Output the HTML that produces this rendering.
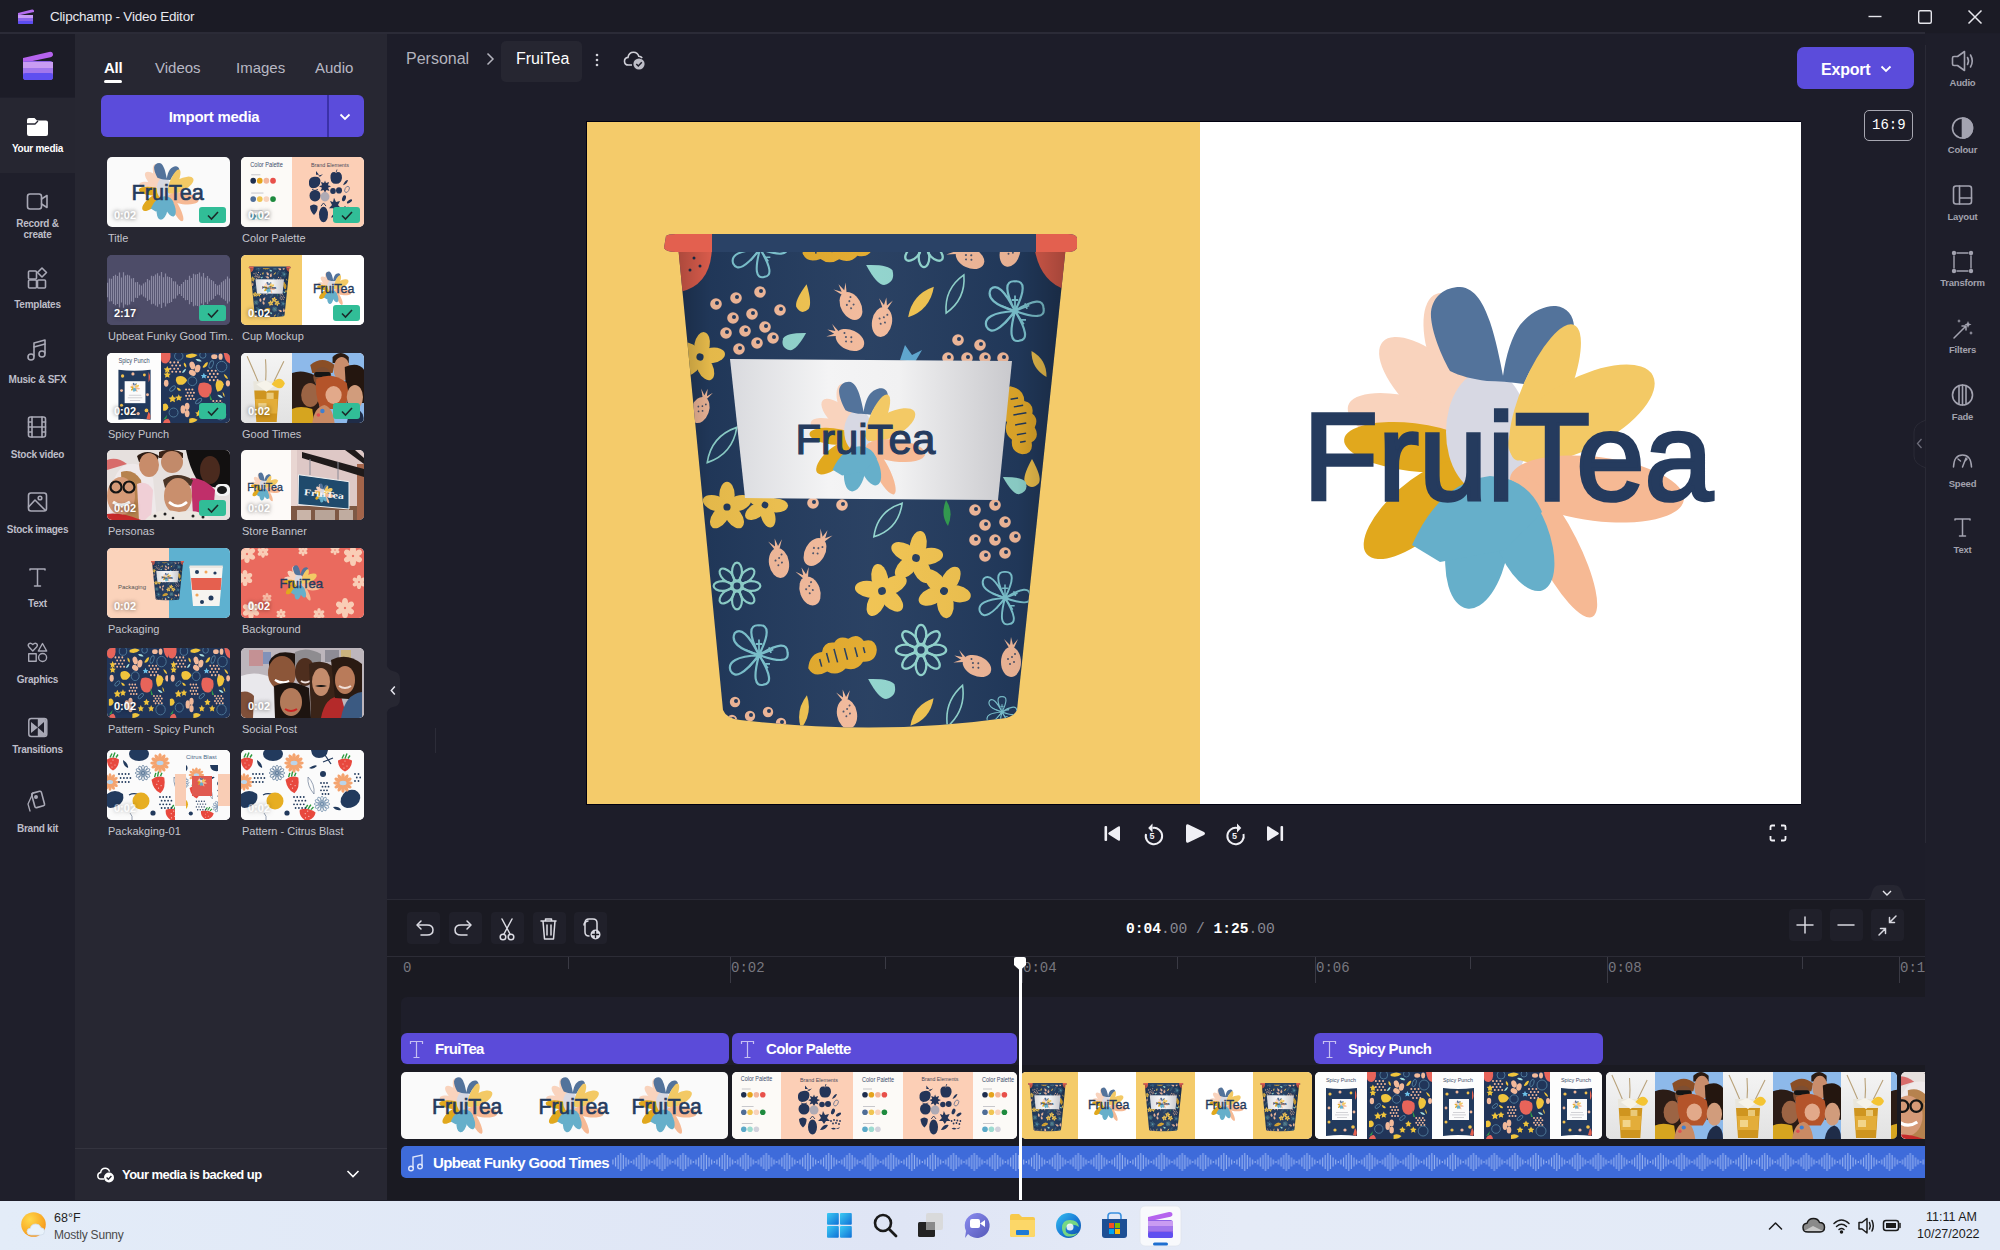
<!DOCTYPE html>
<html><head><meta charset="utf-8">
<style>
*{margin:0;padding:0;box-sizing:border-box}
html,body{width:2000px;height:1250px;overflow:hidden;background:#1d1d29;font-family:"Liberation Sans",sans-serif;color:#fff}
.a{position:absolute}
#title{left:0;top:0;width:2000px;height:33px;background:#1b1b25}
#tline{left:0;top:32px;width:1925px;height:2px;background:#2b2b37}
#rail{left:0;top:34px;width:75px;height:1166px;background:#1f1f2b}
#logo{left:0;top:34px;width:75px;height:63px;background:#1c1c27}
#sel{left:0;top:98px;width:75px;height:75px;background:#262631}
#panel{left:75px;top:34px;width:312px;height:1166px;background:#272732}
#main{left:387px;top:34px;width:1538px;height:865px;background:#1d1d29}
#rrail{left:1925px;top:34px;width:75px;height:1166px;background:#1e1e2a}
#tl{left:387px;top:899px;width:1538px;height:301px;background:#1a1a22}
#task{left:0;top:1201px;width:2000px;height:49px;background:linear-gradient(90deg,#e3ecf8,#dfe5f5 45%,#e5ebf7 62%,#e2eaf7)}
.nl{font-size:10px;color:#bdbdc8;text-align:center;width:75px;left:0;font-weight:bold;letter-spacing:-0.25px}
.tab{font-size:15px;color:#b8b8c4;top:59px}
.thumb{width:123px;height:70px;border-radius:5px;overflow:hidden;background:#fff}
.lbl{font-size:11px;color:#c4c4cc;white-space:nowrap}
.dur{font-size:11px;font-weight:bold;color:#fff;text-shadow:0 0 4px rgba(0,0,0,.6)}
.chk{width:27px;height:16px;border-radius:3px;background:#31bd97}
.rl{font-size:9.5px;color:#a2a2ae;text-align:center;width:75px;left:1925px;font-weight:bold;letter-spacing:-0.2px}
.tb{width:33px;height:32px;border-radius:4px;background:#20202a}
.rul{font-family:"Liberation Mono",monospace;font-size:14px;color:#77777f;top:960px}
.tick{width:1px;background:#3a3a44;top:957px}
.clipT{height:31px;top:1033px;border-radius:6px;background:#5b4bd9}
.ct{font-size:15px;font-weight:bold;letter-spacing:-0.6px;top:1040px}
.clipV{height:67px;top:1072px;border-radius:5px;overflow:hidden;background:#fff}
</style></head><body>
<svg width="0" height="0" style="position:absolute">
<defs>
<symbol id="fl" viewBox="1290 280 440 350">
<ellipse cx="1460.6" cy="357.0" rx="67.6" ry="30.0" transform="rotate(-111.2 1460.6 357.0)" fill="#f9d3bd"/>
<ellipse cx="1436.4" cy="390.9" rx="72.7" ry="30.0" transform="rotate(-137.5 1436.4 390.9)" fill="#f9d3bd"/>
<ellipse cx="1419.1" cy="427.8" rx="74.3" ry="28.0" transform="rotate(-162.6 1419.1 427.8)" fill="#f9d3bd"/>
<ellipse cx="1412.1" cy="447.1" rx="68.4" ry="24.0" transform="rotate(-173.4 1412.1 447.1)" fill="#e1a81d"/>
<ellipse cx="1418.4" cy="509.7" rx="68.2" ry="28.0" transform="rotate(139.1 1418.4 509.7)" fill="#e1a81d"/>
<ellipse cx="1487" cy="432" rx="41" ry="62" fill="#d7d8e3"/>
<path d="M1450 371 C1438 350 1430 325 1431 312 C1433 296 1445 287 1460 287 C1476 288 1484 305 1490 322 C1496 340 1500 360 1503 376 C1506 355 1512 336 1520 325 C1530 312 1545 305 1556 306 C1567 307 1574 316 1574 327 L1552 344 C1540 355 1530 368 1524 384 C1510 382 1498 381 1487 381 C1472 379 1460 376 1450 371Z" fill="#53739b"/>
<ellipse cx="1545.0" cy="392.4" rx="73.5" ry="23.0" transform="rotate(-66.7 1545.0 392.4)" fill="#f3c965"/>
<ellipse cx="1581.4" cy="413.7" rx="81.0" ry="35.0" transform="rotate(-28.2 1581.4 413.7)" fill="#f3c965"/>
<ellipse cx="1596.9" cy="489.0" rx="87.6" ry="32.0" transform="rotate(7.2 1596.9 489.0)" fill="#f6b994"/>
<ellipse cx="1557.3" cy="547.4" rx="77.8" ry="21.0" transform="rotate(63.1 1557.3 547.4)" fill="#f6b994"/>
<ellipse cx="1477.5" cy="544.3" rx="65.1" ry="31.0" transform="rotate(99.3 1477.5 544.3)" fill="#66afca"/>
<ellipse cx="1521.4" cy="535.1" rx="59.1" ry="27.0" transform="rotate(68.8 1521.4 535.1)" fill="#66afca"/>
<path d="M1412 545 Q1440 482 1490 476 Q1528 478 1542 512 L1505 550 L1440 562Z" fill="#66afca"/>
</symbol>
<symbol id="lg" viewBox="1290 280 440 350">
<use href="#fl" x="1290" y="280" width="440" height="350"/>
<text x="1303" y="500" font-family="Liberation Sans" font-size="125" textLength="410" lengthAdjust="spacingAndGlyphs" fill="#253b5e" stroke="#253b5e" stroke-width="3.6">FruiTea</text>
</symbol>

<symbol id="dz" viewBox="-30 -30 60 60"><g fill="none" stroke="#8fd3cc" stroke-width="2.4"><circle r="5"/><ellipse cx="0" cy="-16" rx="5.5" ry="10"/><ellipse cx="0" cy="-16" rx="5.5" ry="10" transform="rotate(45)"/><ellipse cx="0" cy="-16" rx="5.5" ry="10" transform="rotate(90)"/><ellipse cx="0" cy="-16" rx="5.5" ry="10" transform="rotate(135)"/><ellipse cx="0" cy="-16" rx="5.5" ry="10" transform="rotate(180)"/><ellipse cx="0" cy="-16" rx="5.5" ry="10" transform="rotate(225)"/><ellipse cx="0" cy="-16" rx="5.5" ry="10" transform="rotate(270)"/><ellipse cx="0" cy="-16" rx="5.5" ry="10" transform="rotate(315)"/></g></symbol>
<symbol id="hb" viewBox="-30 -30 60 60"><g fill="none" stroke="#7cc3cf" stroke-width="2"><path d="M0 0 Q-14 -28 0 -27 Q14 -28 0 0 Q26 -16 26 -2 Q28 10 0 0 Q16 26 4 27 Q-8 30 0 0 Q-20 26 -26 14 Q-30 2 0 0 Q-28 -8 -22 -20 Q-14 -28 0 0Z"/><path d="M0 0 L0 -14 M0 0 L13 -5 M0 0 L8 12 M0 0 L-9 11 M0 0 L-13 -5 M-3 -10 L3 -10 M9 -7 L11 -2 M6 8 L10 8" stroke-width="1.6"/></g></symbol>
<symbol id="cup" viewBox="587 122 613 682">
<rect x="587" y="122" width="613" height="682" fill="#f4cb6a"/><use href="#cupb" x="587" y="122" width="613" height="682"/>
</symbol>
<symbol id="cupb" viewBox="587 122 613 682">
<defs>
<clipPath id="cb"><path d="M678 245 L1066 245 L1017 710 Q1014 716 1006 718 Q880 736 740 720 Q726 718 723 710Z"/></clipPath>
<linearGradient id="sh" x1="0" x2="1" y1="0" y2="0"><stop offset="0" stop-color="#000" stop-opacity=".35"/><stop offset=".12" stop-color="#000" stop-opacity=".05"/><stop offset=".5" stop-color="#fff" stop-opacity=".04"/><stop offset=".85" stop-color="#000" stop-opacity=".05"/><stop offset="1" stop-color="#000" stop-opacity=".35"/></linearGradient>
<linearGradient id="lbg" x1="0" x2="1" y1="0" y2="0"><stop offset="0" stop-color="#d9dade"/><stop offset=".35" stop-color="#f4f4f5"/><stop offset=".6" stop-color="#f1f1f2"/><stop offset="1" stop-color="#c9c9cd"/></linearGradient>
</defs>
<g clip-path="url(#cb)">
<rect x="660" y="240" width="420" height="500" fill="#223a5d"/>
<path d="M660 245 L712 245 Q712 285 680 292 L660 292Z" fill="#e3604f"/>
<path d="M1034 245 L1080 245 L1080 292 Q1040 290 1034 245Z" fill="#e3604f"/>
<g fill="#1d2f4d"><circle cx="694" cy="258" r="1.5"/><circle cx="700" cy="266" r="1.5"/><circle cx="690" cy="270" r="1.5"/></g>
<use href="#hb" x="729.0" y="218.0" width="62" height="62"/>
<g transform="translate(838 246) rotate(-5) scale(1.029 0.944)" fill="#e2a92a"><path d="M-35 4 Q-30 -10 -18 -8 Q-14 -18 -4 -14 Q2 -20 10 -14 Q20 -18 24 -8 Q36 -8 34 4 Q30 16 18 12 Q10 20 0 14 Q-10 20 -18 12 Q-32 16 -35 4Z"/><path d="M-22 -2 V6 M-14 -6 V4 M-6 -8 V6 M4 -6 V6 M14 -4 V6 M22 -2 V4" stroke="#223a5d" stroke-width="1.5"/></g>
<use href="#dz" x="895.0" y="213.0" width="58" height="58"/>
<g transform="translate(970 258) rotate(-65) scale(1.0)"><ellipse rx="10" ry="15" fill="#f2b99a"/><path d="M-2 -14 L-7 -23 L-1 -17 L0 -25 L2 -17 L7 -23 L3 -14Z" fill="#f2b99a"/><g fill="#223a5d" opacity=".8"><circle cx="-3" cy="-3" r="1"/><circle cx="1" cy="-5" r="1"/><circle cx="3" cy="0" r="1"/><circle cx="-1" cy="2" r="1"/><circle cx="4" cy="-8" r="1"/></g></g>
<g transform="translate(1010 252) rotate(15) scale(1.0)"><ellipse rx="10" ry="15" fill="#f2b99a"/><path d="M-2 -14 L-7 -23 L-1 -17 L0 -25 L2 -17 L7 -23 L3 -14Z" fill="#f2b99a"/><g fill="#223a5d" opacity=".8"><circle cx="-3" cy="-3" r="1"/><circle cx="1" cy="-5" r="1"/><circle cx="3" cy="0" r="1"/><circle cx="-1" cy="2" r="1"/><circle cx="4" cy="-8" r="1"/></g></g>
<path transform="translate(880 273) rotate(-60)" d="M0 -16.0 Q12 3.2 8.399999999999999 9.6 Q0 18.0 -8.399999999999999 9.6 Q-12 3.2 0 -16.0Z" fill="#8fd3cc"/>
<circle cx="716" cy="304" r="5.8" fill="#f2b99a"/><circle cx="717" cy="303" r="2" fill="#223a5d"/>
<circle cx="736" cy="298" r="5.8" fill="#f2b99a"/><circle cx="737" cy="297" r="2" fill="#223a5d"/>
<circle cx="760" cy="292" r="5.8" fill="#f2b99a"/><circle cx="761" cy="291" r="2" fill="#223a5d"/>
<circle cx="780" cy="310" r="5.8" fill="#f2b99a"/><circle cx="781" cy="309" r="2" fill="#223a5d"/>
<circle cx="733" cy="318" r="5.8" fill="#f2b99a"/><circle cx="734" cy="317" r="2" fill="#223a5d"/>
<circle cx="752" cy="314" r="5.8" fill="#f2b99a"/><circle cx="753" cy="313" r="2" fill="#223a5d"/>
<circle cx="726" cy="333" r="5.8" fill="#f2b99a"/><circle cx="727" cy="332" r="2" fill="#223a5d"/>
<circle cx="745" cy="331" r="5.8" fill="#f2b99a"/><circle cx="746" cy="330" r="2" fill="#223a5d"/>
<circle cx="765" cy="327" r="5.8" fill="#f2b99a"/><circle cx="766" cy="326" r="2" fill="#223a5d"/>
<circle cx="739" cy="349" r="5.8" fill="#f2b99a"/><circle cx="740" cy="348" r="2" fill="#223a5d"/>
<circle cx="757" cy="343" r="5.8" fill="#f2b99a"/><circle cx="758" cy="342" r="2" fill="#223a5d"/>
<circle cx="773" cy="338" r="5.8" fill="#f2b99a"/><circle cx="774" cy="337" r="2" fill="#223a5d"/>
<path transform="translate(804 299) rotate(10)" d="M0 -15.0 Q9 3.0 6.3 9.0 Q0 17.0 -6.3 9.0 Q-9 3.0 0 -15.0Z" fill="#f0c24e"/>
<g transform="translate(851 306) rotate(-30) scale(1.0)"><ellipse rx="10" ry="15" fill="#f2b99a"/><path d="M-2 -14 L-7 -23 L-1 -17 L0 -25 L2 -17 L7 -23 L3 -14Z" fill="#f2b99a"/><g fill="#223a5d" opacity=".8"><circle cx="-3" cy="-3" r="1"/><circle cx="1" cy="-5" r="1"/><circle cx="3" cy="0" r="1"/><circle cx="-1" cy="2" r="1"/><circle cx="4" cy="-8" r="1"/></g></g>
<g transform="translate(882 322) rotate(10) scale(1.0)"><ellipse rx="10" ry="15" fill="#f2b99a"/><path d="M-2 -14 L-7 -23 L-1 -17 L0 -25 L2 -17 L7 -23 L3 -14Z" fill="#f2b99a"/><g fill="#223a5d" opacity=".8"><circle cx="-3" cy="-3" r="1"/><circle cx="1" cy="-5" r="1"/><circle cx="3" cy="0" r="1"/><circle cx="-1" cy="2" r="1"/><circle cx="4" cy="-8" r="1"/></g></g>
<g transform="translate(850 340) rotate(-65) scale(1.0)"><ellipse rx="10" ry="15" fill="#f2b99a"/><path d="M-2 -14 L-7 -23 L-1 -17 L0 -25 L2 -17 L7 -23 L3 -14Z" fill="#f2b99a"/><g fill="#223a5d" opacity=".8"><circle cx="-3" cy="-3" r="1"/><circle cx="1" cy="-5" r="1"/><circle cx="3" cy="0" r="1"/><circle cx="-1" cy="2" r="1"/><circle cx="4" cy="-8" r="1"/></g></g>
<path transform="translate(921 302) rotate(40)" d="M0 -20.0 Q12 0 0 20.0 Q-12 0 0 -20.0Z" fill="#f0c24e"/>
<path transform="translate(955 294) rotate(25)" d="M0 -21.0 Q12 0 0 21.0 Q-12 0 0 -21.0Z" fill="none" stroke="#8fd3cc" stroke-width="1.6"/>
<use href="#hb" x="982.0" y="278.0" width="66" height="66"/>
<path transform="translate(794 340) rotate(60)" d="M0 -14.0 Q10 2.8000000000000003 7.0 8.4 Q0 16.0 -7.0 8.4 Q-10 2.8000000000000003 0 -14.0Z" fill="#8fd3cc"/>
<circle cx="958" cy="340" r="5.8" fill="#f2b99a"/><circle cx="959" cy="339" r="2" fill="#223a5d"/>
<circle cx="980" cy="345" r="5.8" fill="#f2b99a"/><circle cx="981" cy="344" r="2" fill="#223a5d"/>
<circle cx="948" cy="358" r="5.8" fill="#f2b99a"/><circle cx="949" cy="357" r="2" fill="#223a5d"/>
<circle cx="967" cy="358" r="5.8" fill="#f2b99a"/><circle cx="968" cy="357" r="2" fill="#223a5d"/>
<circle cx="985" cy="358" r="5.8" fill="#f2b99a"/><circle cx="986" cy="357" r="2" fill="#223a5d"/>
<circle cx="1003" cy="358" r="5.8" fill="#f2b99a"/><circle cx="1004" cy="357" r="2" fill="#223a5d"/>
<g transform="translate(700 357) rotate(10)" fill="#f0c24e"><ellipse cx="0" cy="-12.0" rx="7.7" ry="13.2" transform="rotate(0)"/><ellipse cx="0" cy="-12.0" rx="7.7" ry="13.2" transform="rotate(72)"/><ellipse cx="0" cy="-12.0" rx="7.7" ry="13.2" transform="rotate(144)"/><ellipse cx="0" cy="-12.0" rx="7.7" ry="13.2" transform="rotate(216)"/><ellipse cx="0" cy="-12.0" rx="7.7" ry="13.2" transform="rotate(288)"/><circle r="3.6" fill="#223a5d"/></g>
<path d="M905 345 L912 355 L922 350 L915 362 L900 360Z" fill="#5ba5cf"/>
<path transform="translate(1039 364) rotate(-30)" d="M0 -15.0 Q9 0 0 15.0 Q-9 0 0 -15.0Z" fill="#f0c24e"/>
<g transform="translate(1020 420) rotate(80) scale(1.000 0.944)" fill="#e2a92a"><path d="M-35 4 Q-30 -10 -18 -8 Q-14 -18 -4 -14 Q2 -20 10 -14 Q20 -18 24 -8 Q36 -8 34 4 Q30 16 18 12 Q10 20 0 14 Q-10 20 -18 12 Q-32 16 -35 4Z"/><path d="M-22 -2 V6 M-14 -6 V4 M-6 -8 V6 M4 -6 V6 M14 -4 V6 M22 -2 V4" stroke="#223a5d" stroke-width="1.5"/></g>
<g transform="translate(700 410) rotate(20) scale(0.9)"><ellipse rx="10" ry="15" fill="#f2b99a"/><path d="M-2 -14 L-7 -23 L-1 -17 L0 -25 L2 -17 L7 -23 L3 -14Z" fill="#f2b99a"/><g fill="#223a5d" opacity=".8"><circle cx="-3" cy="-3" r="1"/><circle cx="1" cy="-5" r="1"/><circle cx="3" cy="0" r="1"/><circle cx="-1" cy="2" r="1"/><circle cx="4" cy="-8" r="1"/></g></g>
<path transform="translate(722 445) rotate(40)" d="M0 -23.0 Q14 0 0 23.0 Q-14 0 0 -23.0Z" fill="none" stroke="#8fd3cc" stroke-width="1.6"/>
<path transform="translate(1032 474) rotate(0)" d="M0 -15.0 Q10 3.0 7.0 9.0 Q0 17.0 -7.0 9.0 Q-10 3.0 0 -15.0Z" fill="#f0c24e"/>
<path transform="translate(1015 484) rotate(-60)" d="M0 -14.0 Q10 2.8000000000000003 7.0 8.4 Q0 16.0 -7.0 8.4 Q-10 2.8000000000000003 0 -14.0Z" fill="#8fd3cc"/>
<g transform="translate(727 507) rotate(0)" fill="#f0c24e"><ellipse cx="0" cy="-12.0" rx="7.7" ry="13.2" transform="rotate(0)"/><ellipse cx="0" cy="-12.0" rx="7.7" ry="13.2" transform="rotate(72)"/><ellipse cx="0" cy="-12.0" rx="7.7" ry="13.2" transform="rotate(144)"/><ellipse cx="0" cy="-12.0" rx="7.7" ry="13.2" transform="rotate(216)"/><ellipse cx="0" cy="-12.0" rx="7.7" ry="13.2" transform="rotate(288)"/><circle r="3.6" fill="#223a5d"/></g>
<g transform="translate(765 505) rotate(20)" fill="#f0c24e"><ellipse cx="0" cy="-11.0" rx="7.0" ry="12.1" transform="rotate(0)"/><ellipse cx="0" cy="-11.0" rx="7.0" ry="12.1" transform="rotate(72)"/><ellipse cx="0" cy="-11.0" rx="7.0" ry="12.1" transform="rotate(144)"/><ellipse cx="0" cy="-11.0" rx="7.0" ry="12.1" transform="rotate(216)"/><ellipse cx="0" cy="-11.0" rx="7.0" ry="12.1" transform="rotate(288)"/><circle r="3.3" fill="#223a5d"/></g>
<circle cx="813" cy="503" r="5.8" fill="#f2b99a"/><circle cx="814" cy="502" r="2" fill="#223a5d"/>
<circle cx="842" cy="505" r="5.8" fill="#f2b99a"/><circle cx="843" cy="504" r="2" fill="#223a5d"/>
<path transform="translate(888 520) rotate(40)" d="M0 -22.0 Q14 0 0 22.0 Q-14 0 0 -22.0Z" fill="none" stroke="#8fd3cc" stroke-width="1.6"/>
<path d="M946 500 Q954 512 948 526 Q940 515 946 500Z" fill="#2f9a4d"/>
<circle cx="975" cy="510" r="5.8" fill="#f2b99a"/><circle cx="976" cy="509" r="2" fill="#223a5d"/>
<circle cx="995" cy="505" r="5.8" fill="#f2b99a"/><circle cx="996" cy="504" r="2" fill="#223a5d"/>
<circle cx="985" cy="525" r="5.8" fill="#f2b99a"/><circle cx="986" cy="524" r="2" fill="#223a5d"/>
<circle cx="1005" cy="522" r="5.8" fill="#f2b99a"/><circle cx="1006" cy="521" r="2" fill="#223a5d"/>
<circle cx="975" cy="540" r="5.8" fill="#f2b99a"/><circle cx="976" cy="539" r="2" fill="#223a5d"/>
<circle cx="995" cy="540" r="5.8" fill="#f2b99a"/><circle cx="996" cy="539" r="2" fill="#223a5d"/>
<circle cx="1015" cy="537" r="5.8" fill="#f2b99a"/><circle cx="1016" cy="536" r="2" fill="#223a5d"/>
<circle cx="985" cy="556" r="5.8" fill="#f2b99a"/><circle cx="986" cy="555" r="2" fill="#223a5d"/>
<circle cx="1005" cy="553" r="5.8" fill="#f2b99a"/><circle cx="1006" cy="552" r="2" fill="#223a5d"/>
<g transform="translate(916 558) rotate(10)" fill="#f0c24e"><ellipse cx="0" cy="-13.0" rx="8.3" ry="14.3" transform="rotate(0)"/><ellipse cx="0" cy="-13.0" rx="8.3" ry="14.3" transform="rotate(72)"/><ellipse cx="0" cy="-13.0" rx="8.3" ry="14.3" transform="rotate(144)"/><ellipse cx="0" cy="-13.0" rx="8.3" ry="14.3" transform="rotate(216)"/><ellipse cx="0" cy="-13.0" rx="8.3" ry="14.3" transform="rotate(288)"/><circle r="3.9" fill="#223a5d"/></g>
<g transform="translate(882 591) rotate(-10)" fill="#f0c24e"><ellipse cx="0" cy="-13.0" rx="8.3" ry="14.3" transform="rotate(0)"/><ellipse cx="0" cy="-13.0" rx="8.3" ry="14.3" transform="rotate(72)"/><ellipse cx="0" cy="-13.0" rx="8.3" ry="14.3" transform="rotate(144)"/><ellipse cx="0" cy="-13.0" rx="8.3" ry="14.3" transform="rotate(216)"/><ellipse cx="0" cy="-13.0" rx="8.3" ry="14.3" transform="rotate(288)"/><circle r="3.9" fill="#223a5d"/></g>
<g transform="translate(944 591) rotate(30)" fill="#f0c24e"><ellipse cx="0" cy="-13.0" rx="8.3" ry="14.3" transform="rotate(0)"/><ellipse cx="0" cy="-13.0" rx="8.3" ry="14.3" transform="rotate(72)"/><ellipse cx="0" cy="-13.0" rx="8.3" ry="14.3" transform="rotate(144)"/><ellipse cx="0" cy="-13.0" rx="8.3" ry="14.3" transform="rotate(216)"/><ellipse cx="0" cy="-13.0" rx="8.3" ry="14.3" transform="rotate(288)"/><circle r="3.9" fill="#223a5d"/></g>
<g transform="translate(779 563) rotate(-10) scale(1.0)"><ellipse rx="10" ry="15" fill="#f2b99a"/><path d="M-2 -14 L-7 -23 L-1 -17 L0 -25 L2 -17 L7 -23 L3 -14Z" fill="#f2b99a"/><g fill="#223a5d" opacity=".8"><circle cx="-3" cy="-3" r="1"/><circle cx="1" cy="-5" r="1"/><circle cx="3" cy="0" r="1"/><circle cx="-1" cy="2" r="1"/><circle cx="4" cy="-8" r="1"/></g></g>
<g transform="translate(815 552) rotate(30) scale(1.0)"><ellipse rx="10" ry="15" fill="#f2b99a"/><path d="M-2 -14 L-7 -23 L-1 -17 L0 -25 L2 -17 L7 -23 L3 -14Z" fill="#f2b99a"/><g fill="#223a5d" opacity=".8"><circle cx="-3" cy="-3" r="1"/><circle cx="1" cy="-5" r="1"/><circle cx="3" cy="0" r="1"/><circle cx="-1" cy="2" r="1"/><circle cx="4" cy="-8" r="1"/></g></g>
<g transform="translate(810 591) rotate(-20) scale(1.0)"><ellipse rx="10" ry="15" fill="#f2b99a"/><path d="M-2 -14 L-7 -23 L-1 -17 L0 -25 L2 -17 L7 -23 L3 -14Z" fill="#f2b99a"/><g fill="#223a5d" opacity=".8"><circle cx="-3" cy="-3" r="1"/><circle cx="1" cy="-5" r="1"/><circle cx="3" cy="0" r="1"/><circle cx="-1" cy="2" r="1"/><circle cx="4" cy="-8" r="1"/></g></g>
<use href="#dz" x="710.0" y="559.0" width="54" height="54"/>
<use href="#hb" x="976.0" y="569.0" width="58" height="58"/>
<use href="#hb" x="726.0" y="622.0" width="66" height="66"/>
<g transform="translate(842 655) rotate(-15) scale(1.029 1.000)" fill="#e2a92a"><path d="M-35 4 Q-30 -10 -18 -8 Q-14 -18 -4 -14 Q2 -20 10 -14 Q20 -18 24 -8 Q36 -8 34 4 Q30 16 18 12 Q10 20 0 14 Q-10 20 -18 12 Q-32 16 -35 4Z"/><path d="M-22 -2 V6 M-14 -6 V4 M-6 -8 V6 M4 -6 V6 M14 -4 V6 M22 -2 V4" stroke="#223a5d" stroke-width="1.5"/></g>
<use href="#dz" x="892.0" y="621.0" width="58" height="58"/>
<g transform="translate(977 666) rotate(-65) scale(1.0)"><ellipse rx="10" ry="15" fill="#f2b99a"/><path d="M-2 -14 L-7 -23 L-1 -17 L0 -25 L2 -17 L7 -23 L3 -14Z" fill="#f2b99a"/><g fill="#223a5d" opacity=".8"><circle cx="-3" cy="-3" r="1"/><circle cx="1" cy="-5" r="1"/><circle cx="3" cy="0" r="1"/><circle cx="-1" cy="2" r="1"/><circle cx="4" cy="-8" r="1"/></g></g>
<g transform="translate(1011 662) rotate(0) scale(1.0)"><ellipse rx="10" ry="15" fill="#f2b99a"/><path d="M-2 -14 L-7 -23 L-1 -17 L0 -25 L2 -17 L7 -23 L3 -14Z" fill="#f2b99a"/><g fill="#223a5d" opacity=".8"><circle cx="-3" cy="-3" r="1"/><circle cx="1" cy="-5" r="1"/><circle cx="3" cy="0" r="1"/><circle cx="-1" cy="2" r="1"/><circle cx="4" cy="-8" r="1"/></g></g>
<path transform="translate(882 687) rotate(-60)" d="M0 -16.0 Q12 3.2 8.399999999999999 9.6 Q0 18.0 -8.399999999999999 9.6 Q-12 3.2 0 -16.0Z" fill="#8fd3cc"/>
<circle cx="735" cy="702" r="5.2" fill="#f2b99a"/><circle cx="736" cy="701" r="2" fill="#223a5d"/>
<circle cx="750" cy="716" r="5.2" fill="#f2b99a"/><circle cx="751" cy="715" r="2" fill="#223a5d"/>
<circle cx="768" cy="712" r="5.2" fill="#f2b99a"/><circle cx="769" cy="711" r="2" fill="#223a5d"/>
<circle cx="732" cy="720" r="5.2" fill="#f2b99a"/><circle cx="733" cy="719" r="2" fill="#223a5d"/>
<circle cx="781" cy="723" r="5.2" fill="#f2b99a"/><circle cx="782" cy="722" r="2" fill="#223a5d"/>
<path transform="translate(804 712) rotate(10)" d="M0 -17.0 Q9 0 0 17.0 Q-9 0 0 -17.0Z" fill="#f0c24e"/>
<g transform="translate(847 714) rotate(-10) scale(1.0)"><ellipse rx="10" ry="15" fill="#f2b99a"/><path d="M-2 -14 L-7 -23 L-1 -17 L0 -25 L2 -17 L7 -23 L3 -14Z" fill="#f2b99a"/><g fill="#223a5d" opacity=".8"><circle cx="-3" cy="-3" r="1"/><circle cx="1" cy="-5" r="1"/><circle cx="3" cy="0" r="1"/><circle cx="-1" cy="2" r="1"/><circle cx="4" cy="-8" r="1"/></g></g>
<path transform="translate(922 712) rotate(40)" d="M0 -18.0 Q11 0 0 18.0 Q-11 0 0 -18.0Z" fill="#f0c24e"/>
<path transform="translate(955 706) rotate(20)" d="M0 -22.0 Q12 0 0 22.0 Q-12 0 0 -22.0Z" fill="none" stroke="#8fd3cc" stroke-width="1.6"/>
<use href="#hb" x="985.0" y="695.0" width="34" height="34"/>
<rect x="660" y="240" width="420" height="500" fill="url(#sh)"/>
<path d="M730 359 L1012 361 L998 500 L745 498Z" fill="url(#lbg)"/>
</g>
<path d="M666 236 Q668 234 676 234 L1068 234 Q1076 234 1077 238 L1077 248 Q1075 252 1068 252 L676 252 Q666 252 664 248Z" fill="#2a4266"/>
<path d="M666 236 Q668 234 676 234 L712 234 L712 252 L676 252 Q666 252 664 248Z" fill="#e3604f"/>
<path d="M1036 234 L1068 234 Q1076 234 1077 238 L1077 248 Q1075 252 1068 252 L1036 252Z" fill="#e3604f"/>
<use href="#lg" x="791" y="379" width="150" height="120"/>
</symbol>

<symbol id="cp" viewBox="0 0 50 67" preserveAspectRatio="none">
<rect width="50" height="67" fill="#fcfaf7"/>
<text x="9" y="9.5" font-family="Liberation Sans" font-size="6.3" fill="#3b4d6a" textLength="32" lengthAdjust="spacingAndGlyphs">Color Palette</text>
<g fill="#c8c8cc"><rect x="10" y="16.5" width="9" height="1"/><rect x="10" y="34" width="12" height="1"/><rect x="10" y="51" width="11" height="1"/></g>
<circle cx="12" cy="22.7" r="2.8" fill="#1f2e4e"/><circle cx="18.4" cy="22.7" r="2.8" fill="#e5a41c"/><circle cx="24.9" cy="22.7" r="2.8" fill="#f3b599"/><circle cx="31.4" cy="22.7" r="2.8" fill="#e8504a"/>
<circle cx="12" cy="40.3" r="2.8" fill="#4f6d97"/><circle cx="18.4" cy="40.3" r="2.8" fill="#f0c552"/><circle cx="24.9" cy="40.3" r="2.8" fill="#f8d3bd"/><circle cx="31.4" cy="40.3" r="2.8" fill="#1e8a3e"/>
<circle cx="12" cy="57.2" r="2.8" fill="#5ba9c8"/><circle cx="18.4" cy="57.2" r="2.8" fill="#9ddbd0"/><circle cx="24.9" cy="57.2" r="2.8" fill="#d2d2dc"/>
</symbol>
<symbol id="be" viewBox="0 0 72 67" preserveAspectRatio="none">
<rect width="72" height="67" fill="#fccfb6"/>
<text x="19" y="9.5" font-family="Liberation Sans" font-size="6" fill="#4a4a5a" textLength="38" lengthAdjust="spacingAndGlyphs">Brand Elements</text>
<g fill="#243558">
<path d="M17 26 Q16 20 22 19 Q28 18 28.5 23 Q28 30 21 30 Q17.5 29.5 17 26Z"/><path d="M24 17 L24 13.5 L27 17Z M26 18 L31 16.5 L28 19Z"/>
<path d="M33 22.5 L34 25 L37 24 L36 27 L39 28 L36 29.5 L37.5 32.5 L34.5 31.5 L33 34 L31.5 31.5 L28.5 32.5 L30 29.5 L27 28 L30 27 L29 24 L32 25Z"/>
<path d="M38.5 20 Q38 14 43 14.5 L44 15.5 L45 14.5 Q50 14 50 20 Q49 26 44 25.5 Q39 26 38.5 20Z"/><path d="M44 15 L45 12" stroke="#243558" stroke-width=".8"/>
<path d="M51 27 Q53 22 56 22 Q55 26 51 27Z"/>
<circle cx="23" cy="37" r="5.5"/><path d="M20 31 L23 32 L26 31" stroke="#243558" stroke-width=".8" fill="none"/>
<circle cx="41" cy="32.5" r="2.8"/><circle cx="47" cy="32" r="3"/>
<path d="M42 39 L44 43 L48 42 L46 46 L49 49 L45 49 L43 52 L41 49 L37 49 L40 46 L38 42 L41 43Z"/>
<ellipse cx="52" cy="39.5" rx="1.8" ry="3" transform="rotate(20 52 39.5)"/><ellipse cx="57.5" cy="42.5" rx="1.3" ry="3" transform="rotate(60 57.5 42.5)"/>
<path d="M18 47 Q22 44 25.5 47 Q26 52 22 55.5 Q18 52 18 47Z"/>
<ellipse cx="31.5" cy="55" rx="4.5" ry="7.5"/><path d="M29 47 L31.5 44 L34 47" stroke="#243558" stroke-width=".9" fill="none"/>
<path d="M39 58 Q42 52 47 53 Q45 58 39 58Z"/>
<circle cx="50" cy="49" r=".9"/><circle cx="53" cy="48" r=".9"/><circle cx="56" cy="48.5" r=".9"/><circle cx="59" cy="49" r=".9"/><circle cx="52" cy="51.5" r=".9"/><circle cx="55" cy="51" r=".9"/><circle cx="58" cy="52" r=".9"/>
<path d="M50 56.5 Q53 55 55 57 Q52 58 50 56.5Z M55 57 Q57 55 59 55.5 Q57 57.5 55 57Z"/>
</g>
<circle cx="33" cy="38" r="4.5" fill="#9aa0b4" opacity=".8"/>
<ellipse cx="55" cy="31" rx="2" ry="3.2" transform="rotate(30 55 31)" fill="none" stroke="#5a6888" stroke-width=".7"/>
</symbol>
<symbol id="pt" viewBox="0 0 66 67" preserveAspectRatio="none"><rect width="66" height="67" fill="#213559"/><g fill="#e8645a"><path d="M0 0 H9 Q10 8 5 10 Q0 10 0 6Z"/><path d="M60 0 H66 V10 Q61 9 60 0Z"/><path d="M37 29 Q44 27 48 31 Q50 38 45 42 Q40 44 37 40 Q34 34 37 29Z"/><path d="M2 67 Q3 63 7 63 Q9 65 9 67Z"/></g><g fill="#2f9a4d"><path d="M46 38 L49 45 L47 45Z"/><path d="M2 64 L6 59 L5 63Z"/></g><g fill="#f0c43c"><path d="M6.0 12.5 L7.0 14.6 L9.3 14.9 L7.7 16.5 L8.1 18.8 L6.0 17.8 L3.9 18.8 L4.3 16.5 L2.7 14.9 L5.0 14.6Z"/><path d="M6.0 17.5 L7.0 19.6 L9.3 19.9 L7.7 21.5 L8.1 23.8 L6.0 22.8 L3.9 23.8 L4.3 21.5 L2.7 19.9 L5.0 19.6Z"/><path d="M11.0 40.0 L12.2 42.4 L14.8 42.8 L12.9 44.6 L13.4 47.2 L11.0 46.0 L8.6 47.2 L9.1 44.6 L7.2 42.8 L9.8 42.4Z"/><path d="M17.0 39.5 L18.0 41.6 L20.3 41.9 L18.7 43.5 L19.1 45.8 L17.0 44.8 L14.9 45.8 L15.3 43.5 L13.7 41.9 L16.0 41.6Z"/><path d="M36.0 54.5 L37.0 56.6 L39.3 56.9 L37.7 58.5 L38.1 60.8 L36.0 59.8 L33.9 60.8 L34.3 58.5 L32.7 56.9 L35.0 56.6Z"/><path d="M42.0 48.5 L43.0 50.6 L45.3 50.9 L43.7 52.5 L44.1 54.8 L42.0 53.8 L39.9 54.8 L40.3 52.5 L38.7 50.9 L41.0 50.6Z"/><path d="M47.0 54.5 L48.0 56.6 L50.3 56.9 L48.7 58.5 L49.1 60.8 L47.0 59.8 L44.9 60.8 L45.3 58.5 L43.7 56.9 L46.0 56.6Z"/><path d="M24 2 Q30 -1 35 2 Q31 6 24 4Z"/><path d="M22 9 Q25 11 24 14 Q21 12 22 9Z"/><path d="M40 13 Q43 8 45 9 Q44 14 40 14Z"/><path d="M15 23 Q21 20 25 26 Q22 32 16 30 Q13 26 15 23Z"/><path d="M53 27 Q58 24 60 30 Q59 37 54 37 Q51 32 53 27Z"/><path d="M60 20 Q64 22 64 25 Q61 24 60 20Z"/><path d="M15 33 Q19 34 19 36 Q16 37 15 33Z"/><path d="M59 37 Q61 39 61 42 Q59 41 59 37Z"/><path d="M2 49 Q6 47 7 52 Q6 56 2 55Z"/><path d="M27 63 Q31 61 35 64 Q33 67 27 67Z"/></g><g fill="#f2b99a"><ellipse cx="30" cy="12" rx="2.6" ry="3.8" transform="rotate(-20 30 12)"/><ellipse cx="35" cy="15" rx="2.6" ry="3.8" transform="rotate(15 35 15)"/><ellipse cx="30" cy="19" rx="2.6" ry="3.5" transform="rotate(-60 30 19)"/><ellipse cx="51" cy="3.5" rx="3" ry="2.2"/><ellipse cx="57" cy="3.5" rx="2" ry="3"/><ellipse cx="5" cy="29" rx="2.2" ry="3.3"/><ellipse cx="21" cy="54" rx="2.3" ry="4"/><ellipse cx="25" cy="51" rx="2.3" ry="3.5"/><ellipse cx="25" cy="58" rx="2.3" ry="3.5"/><ellipse cx="64" cy="29" rx="2" ry="3"/><circle cx="9.0" cy="9.0" r="1"/><circle cx="12.7" cy="9.0" r="1"/><circle cx="16.3" cy="9.0" r="1"/><circle cx="10.8" cy="12.0" r="1"/><circle cx="14.5" cy="12.0" r="1"/><circle cx="18.2" cy="12.0" r="1"/><circle cx="9.0" cy="15.0" r="1"/><circle cx="12.7" cy="15.0" r="1"/><circle cx="16.3" cy="15.0" r="1"/><circle cx="10.8" cy="18.0" r="1"/><circle cx="14.5" cy="18.0" r="1"/><circle cx="18.2" cy="18.0" r="1"/><circle cx="45.0" cy="17.0" r="1"/><circle cx="48.7" cy="17.0" r="1"/><circle cx="52.3" cy="17.0" r="1"/><circle cx="46.8" cy="20.0" r="1"/><circle cx="50.5" cy="20.0" r="1"/><circle cx="54.2" cy="20.0" r="1"/><circle cx="45.0" cy="23.0" r="1"/><circle cx="48.7" cy="23.0" r="1"/><circle cx="52.3" cy="23.0" r="1"/><circle cx="46.8" cy="26.0" r="1"/><circle cx="50.5" cy="26.0" r="1"/><circle cx="54.2" cy="26.0" r="1"/><circle cx="24.0" cy="35.0" r="1"/><circle cx="27.0" cy="35.0" r="1"/><circle cx="30.0" cy="35.0" r="1"/><circle cx="25.5" cy="38.0" r="1"/><circle cx="28.5" cy="38.0" r="1"/><circle cx="31.5" cy="38.0" r="1"/><circle cx="24.0" cy="41.0" r="1"/><circle cx="27.0" cy="41.0" r="1"/><circle cx="30.0" cy="41.0" r="1"/><circle cx="25.5" cy="44.0" r="1"/><circle cx="28.5" cy="44.0" r="1"/><circle cx="31.5" cy="44.0" r="1"/><circle cx="50.0" cy="46.0" r="1"/><circle cx="53.3" cy="46.0" r="1"/><circle cx="56.7" cy="46.0" r="1"/><circle cx="51.7" cy="48.3" r="1"/><circle cx="55.0" cy="48.3" r="1"/><circle cx="58.3" cy="48.3" r="1"/><circle cx="50.0" cy="50.7" r="1"/><circle cx="53.3" cy="50.7" r="1"/><circle cx="56.7" cy="50.7" r="1"/><circle cx="51.7" cy="53.0" r="1"/><circle cx="55.0" cy="53.0" r="1"/><circle cx="58.3" cy="53.0" r="1"/></g><g fill="#a9e0de"><path d="M33 6 Q37 5 39 8 Q35 9 33 6Z"/><path d="M20 19 Q22 15 24 15 Q23 19 20 19Z"/><path d="M54 40 Q58 40 59 43 Q55 43 54 40Z"/></g><path d="M41 19 L42 21 L44 21 L42.5 22.5 L43 24.5 L41 23.5 L39 24.5 L39.5 22.5 L38 21 L40 21Z" fill="#6cc0e8"/><g fill="none" stroke="#4f7b9a" stroke-width=".9"><circle cx="17" cy="3" r="4"/><circle cx="58" cy="13" r="5"/><circle cx="30" cy="27" r="4.2"/><circle cx="12" cy="57" r="4.3"/><circle cx="57" cy="59" r="5"/><circle cx="40" cy="2" r="3"/><ellipse cx="48" cy="11" rx="1.8" ry="3.8" transform="rotate(20 48 11)"/><ellipse cx="11" cy="34" rx="3.3" ry="1.6" transform="rotate(-40 11 34)"/><ellipse cx="36" cy="46" rx="3.5" ry="1.6" transform="rotate(-40 36 46)"/></g></symbol>
<symbol id="sp" viewBox="0 0 52 67" preserveAspectRatio="none">
<rect width="52" height="67" fill="#fdfdfd"/>
<text x="11" y="9.5" font-family="Liberation Sans" font-size="6.2" fill="#3b4d6a" textLength="30" lengthAdjust="spacingAndGlyphs">Spicy Punch</text>
<path d="M11 16 Q26 18 42 16 L42 64 Q26 62 11 64Z" fill="#223a5d"/>
<g fill="#f2c24e"><circle cx="15" cy="22" r="1.6"/><circle cx="38" cy="55" r="1.8"/><circle cx="20" cy="58" r="1.6"/><circle cx="36" cy="21" r="1.4"/><circle cx="14" cy="50" r="1.5"/></g>
<g fill="#f2b99a"><circle cx="25" cy="20" r="1.5"/><circle cx="30" cy="58" r="1.6"/><circle cx="39" cy="40" r="1.4"/><circle cx="14" cy="36" r="1.4"/></g>
<path d="M40 18 Q43 24 40 28Z" fill="#e5604f"/><path d="M40 56 Q43 60 41 64 L38 63Z" fill="#e5604f"/>
<rect x="17" y="27" width="20" height="21" fill="#fbfbfb"/>
<use href="#fl" x="21" y="28" width="12" height="10"/>
<g fill="#c8c8ce"><rect x="21" y="40" width="12" height=".8"/><rect x="20" y="42.5" width="14" height=".8"/><rect x="22" y="45" width="10" height=".8"/></g>
</symbol>
<symbol id="gl" viewBox="0 0 50 67" preserveAspectRatio="none">
<defs><linearGradient id="glbg" x1="0" y1="0" x2="0" y2="1"><stop offset="0" stop-color="#f4f4f4"/><stop offset="1" stop-color="#e2e2e2"/></linearGradient></defs>
<rect width="50" height="67" fill="url(#glbg)"/>
<path d="M6 3 Q12 16 17 28 M42 8 Q36 20 31 30 M24 6 Q25 18 24 28" stroke="#b9a27a" stroke-width="1.1" fill="none"/>
<path d="M12 27 H38 L35 66 H15Z" fill="#e9e6dc"/>
<path d="M13 36 H37 L35 66 H15Z" fill="#cf951f"/>
<path d="M14 44 H36 L35 58 H15Z" fill="#e3ad3a"/>
<rect x="17" y="48" width="8" height="7" fill="#f5dfa0" opacity=".8"/><rect x="25" y="38" width="7" height="6" fill="#f5dfa0" opacity=".7"/>
<path d="M15 30 L24 26 L33 31 L25 37Z" fill="#f6f3ea"/>
<path d="M30 30 Q38 20 43 29 Q40 38 30 30Z" fill="#f4c433"/>
</symbol>
<symbol id="pp" viewBox="0 0 71 70" preserveAspectRatio="none">
<rect width="71" height="70" fill="#8db9ea"/>
<path d="M0 20 Q10 16 22 22 L30 70 H0Z" fill="#2b1c16"/>
<path d="M18 12 Q30 2 42 12 L40 20 H20Z" fill="#8a4e26"/>
<ellipse cx="30" cy="24" rx="9" ry="10" fill="#7e4e32"/><rect x="22" y="19" width="16" height="5" rx="2" fill="#151515"/>
<path d="M40 4 Q48 -4 56 4 L56 10 H40Z" fill="#2a1a12"/><ellipse cx="49" cy="16" rx="8" ry="12" fill="#c98d6c"/>
<path d="M38 30 L58 28 L60 40 H40Z" fill="#3a2e3a"/>
<path d="M52 14 Q66 8 72 18 V50 H54Z" fill="#24160f"/>
<ellipse cx="18" cy="42" rx="9" ry="12" fill="#9c6444"/>
<path d="M24 26 Q40 18 54 30 Q58 46 50 56 L28 56 Q22 40 24 26Z" fill="#b4542a"/>
<ellipse cx="41" cy="42" rx="8" ry="9" fill="#e2a98a"/>
<ellipse cx="62" cy="44" rx="8" ry="12" fill="#d19c7c"/>
<path d="M0 56 Q8 52 20 56 L22 70 H0Z" fill="#d6a51f"/>
<path d="M20 70 Q22 54 32 52 Q40 54 42 70Z" fill="#c98a64"/><circle cx="30" cy="58" r="2.2" fill="#3f7fd0"/><circle cx="26" cy="62" r="1.8" fill="#e05050"/>
<path d="M54 70 Q56 58 64 56 Q71 58 71 70Z" fill="#1f2c48"/>
</symbol>
<symbol id="ps" viewBox="0 0 123 70" preserveAspectRatio="none">
<rect width="123" height="70" fill="#e6e0de"/>
<path d="M79 0 H123 V38 Q104 40 90 30 Q82 16 79 0Z" fill="#121010"/>
<path d="M0 10 Q10 6 20 14 L0 20Z" fill="#d23a3a" opacity=".7"/>
<path d="M2 70 Q0 30 16 16 Q34 8 46 28 L50 70Z" fill="#efe9ea"/>
<path d="M14 22 Q26 18 34 30 L38 70 H16Z" fill="#b6824e"/>
<path d="M30 34 Q40 30 46 40 L44 70 H32Z" fill="#f0cfd6"/>
<ellipse cx="14" cy="46" rx="14" ry="19" fill="#d59a77"/>
<circle cx="9" cy="37" r="5.5" fill="none" stroke="#141414" stroke-width="2.2"/><circle cx="22" cy="37" r="5.5" fill="none" stroke="#141414" stroke-width="2.2"/>
<path d="M6 52 Q14 58 23 52" stroke="#fff" stroke-width="3" fill="none"/>
<path d="M0 64 Q14 62 34 70 H0Z" fill="#c62a2a"/>
<path d="M30 6 Q40 -2 52 6 L50 12 H32Z" fill="#2b1a12"/><ellipse cx="42" cy="15" rx="10" ry="12" fill="#c88c6a"/>
<path d="M52 2 Q64 -3 76 3 L76 8 H52Z" fill="#3a2418"/><ellipse cx="65" cy="12" rx="11" ry="11" fill="#c28a6a"/>
<ellipse cx="103" cy="20" rx="10" ry="14" fill="#4a2a1e"/>
<path d="M84 28 Q98 28 108 40 L106 66 H86Z" fill="#c02f6a"/>
<path d="M56 30 Q70 20 86 30 L84 36 Q70 30 58 38Z" fill="#4a3426"/>
<ellipse cx="71" cy="46" rx="14" ry="18" fill="#c98f6d"/>
<path d="M62 52 Q71 60 80 52" stroke="#fff" stroke-width="2.6" fill="none"/>
<rect x="108" y="34" width="15" height="12" rx="5" fill="#f4f4f4"/><ellipse cx="115" cy="40" rx="5" ry="4" fill="#1a1a1a"/>
<path d="M38 70 Q50 56 72 62 Q94 58 104 70Z" fill="#ece6e0"/>
<g fill="#222"><circle cx="48" cy="66" r="1.5"/><circle cx="58" cy="64" r="1.5"/><circle cx="86" cy="66" r="1.5"/><circle cx="96" cy="67" r="1.5"/><circle cx="66" cy="68" r="1.3"/></g>
</symbol>
<symbol id="so" viewBox="0 0 123 70" preserveAspectRatio="none">
<rect width="123" height="70" fill="#bdb6bc"/>
<rect x="8" y="2" width="14" height="16" fill="#c8787a" opacity=".6"/><rect x="22" y="4" width="8" height="12" fill="#5a7ab8" opacity=".6"/><rect x="84" y="2" width="14" height="12" fill="#7a7a86" opacity=".7"/><rect x="100" y="2" width="10" height="10" fill="#d8b040" opacity=".5"/>
<path d="M0 28 Q14 22 32 30 L34 70 H0Z" fill="#e9e8ec"/>
<path d="M0 44 Q8 42 13 48 L12 70 H0Z" fill="#80503a"/>
<path d="M28 14 Q34 0 56 6 L58 20 H28Z" fill="#1e140f"/>
<ellipse cx="41" cy="25" rx="14" ry="17" fill="#8c5639"/>
<path d="M34 32 Q41 38 48 33 Q42 36 34 32Z" fill="#fff" stroke="#fff" stroke-width="2"/>
<path d="M54 4 Q66 -2 80 6 L80 20 H54Z" fill="#8e8c90"/>
<ellipse cx="64" cy="24" rx="10" ry="14" fill="#4e2e1e"/>
<path d="M60 33 Q64 36 69 33" stroke="#f2e4e0" stroke-width="2" fill="none"/>
<path d="M68 16 Q82 10 94 20 L94 70 H70Z" fill="#3a2418"/>
<ellipse cx="80" cy="34" rx="9" ry="14" fill="#c48c6c"/><path d="M74 38 Q80 36 86 38 Q80 40 74 38Z" fill="#111"/>
<path d="M80 70 Q84 48 100 48 L106 70Z" fill="#b42a2a"/>
<path d="M90 12 Q106 4 121 16 L121 52 L94 50Z" fill="#2a1a12"/>
<ellipse cx="104" cy="32" rx="10" ry="14" fill="#b97b5a"/>
<path d="M98 38 Q104 42 110 38" stroke="#f0e0d8" stroke-width="2" fill="none"/>
<path d="M100 70 Q104 46 121 44 V70Z" fill="#3b5a82"/>
<path d="M33 38 Q50 30 68 40 L70 70 H34Z" fill="#1d1410"/>
<ellipse cx="50" cy="54" rx="11" ry="14" fill="#b27a5a"/>
<path d="M44 61 Q50 65 56 61" stroke="#c22" stroke-width="2" fill="none"/>
</symbol>
<symbol id="wp" viewBox="0 0 123 70" preserveAspectRatio="none"><rect width="123" height="70" fill="#fbfbfb"/><g fill="#223a5d"><ellipse cx="32" cy="4" rx="10" ry="7"/><path d="M70 0 H87 Q86 8 78 8 Q71 8 70 0Z"/><path d="M0 44 Q8 38 16 44 Q18 52 10 56 Q2 60 0 56Z"/><path d="M100 48 Q104 38 114 40 Q122 44 118 52 Q114 58 106 58 Q98 56 100 48Z"/><path d="M16 10 Q22 14 21 18 Q16 16 16 10Z"/><path d="M68 18 Q74 14 76 16 Q72 20 68 18Z"/><path d="M84 5 L90 14 M82 12 L92 8" stroke="#223a5d" stroke-width="1.2"/><circle cx="82" cy="24" r="3"/><path d="M92 57 Q98 56 100 60 Q95 61 92 57Z"/><circle cx="46" cy="63" r="2.6"/><path d="M22 45 Q28 42 34 46" stroke="#223a5d" stroke-width="1.2" fill="none"/></g><g transform="translate(6 14) rotate(0)"><path d="M-6.0 -4.5 Q0 -8.5 6.0 -4.5 Q6.0 3.25 0 6.5 Q-6.0 3.25 -6.0 -4.5Z" fill="#e8493e"/><path d="M-3 -6.5 L-1 -10.5 M0 -6.5 L2 -11.5 M3 -6.5 L5 -9.5" stroke="#2c9a3e" stroke-width="1.4"/><g fill="#fff" opacity=".7"><circle cx="-2" cy="-1" r=".6"/><circle cx="2" cy="1" r=".6"/><circle cx="0" cy="-4" r=".6"/><circle cx="-1" cy="3" r=".6"/></g></g><g transform="translate(104 15) rotate(0)"><path d="M-7.0 -4.5 Q0 -8.5 7.0 -4.5 Q7.0 3.25 0 6.5 Q-7.0 3.25 -7.0 -4.5Z" fill="#e8493e"/><path d="M-3 -6.5 L-1 -10.5 M0 -6.5 L2 -11.5 M3 -6.5 L5 -9.5" stroke="#2c9a3e" stroke-width="1.4"/><g fill="#fff" opacity=".7"><circle cx="-2" cy="-1" r=".6"/><circle cx="2" cy="1" r=".6"/><circle cx="0" cy="-4" r=".6"/><circle cx="-1" cy="3" r=".6"/></g></g><g transform="translate(52 35) rotate(-10)"><path d="M-6.5 -6.5 Q0 -10.5 6.5 -6.5 Q6.5 4.25 0 8.5 Q-6.5 4.25 -6.5 -6.5Z" fill="#e8493e"/><path d="M-3 -8.5 L-1 -12.5 M0 -8.5 L2 -13.5 M3 -8.5 L5 -11.5" stroke="#2c9a3e" stroke-width="1.4"/><g fill="#fff" opacity=".7"><circle cx="-2" cy="-1" r=".6"/><circle cx="2" cy="1" r=".6"/><circle cx="0" cy="-4" r=".6"/><circle cx="-1" cy="3" r=".6"/></g></g><g transform="translate(66 65) rotate(10)"><path d="M-8.0 -4.0 Q0 -8.0 8.0 -4.0 Q8.0 3.0 0 6.0 Q-8.0 3.0 -8.0 -4.0Z" fill="#e8493e"/><path d="M-3 -6.0 L-1 -10.0 M0 -6.0 L2 -11.0 M3 -6.0 L5 -9.0" stroke="#2c9a3e" stroke-width="1.4"/><g fill="#fff" opacity=".7"><circle cx="-2" cy="-1" r=".6"/><circle cx="2" cy="1" r=".6"/><circle cx="0" cy="-4" r=".6"/><circle cx="-1" cy="3" r=".6"/></g></g><g transform="translate(53 13)" fill="#f4a470"><ellipse cx="0" cy="-5.5" rx="1.8" ry="4.2" transform="rotate(0)"/><ellipse cx="0" cy="-5.5" rx="1.8" ry="4.2" transform="rotate(30)"/><ellipse cx="0" cy="-5.5" rx="1.8" ry="4.2" transform="rotate(60)"/><ellipse cx="0" cy="-5.5" rx="1.8" ry="4.2" transform="rotate(90)"/><ellipse cx="0" cy="-5.5" rx="1.8" ry="4.2" transform="rotate(120)"/><ellipse cx="0" cy="-5.5" rx="1.8" ry="4.2" transform="rotate(150)"/><ellipse cx="0" cy="-5.5" rx="1.8" ry="4.2" transform="rotate(180)"/><ellipse cx="0" cy="-5.5" rx="1.8" ry="4.2" transform="rotate(210)"/><ellipse cx="0" cy="-5.5" rx="1.8" ry="4.2" transform="rotate(240)"/><ellipse cx="0" cy="-5.5" rx="1.8" ry="4.2" transform="rotate(270)"/><ellipse cx="0" cy="-5.5" rx="1.8" ry="4.2" transform="rotate(300)"/><ellipse cx="0" cy="-5.5" rx="1.8" ry="4.2" transform="rotate(330)"/><ellipse rx="3.5" ry="2.2" fill="#b9d4ec"/></g><g transform="translate(3 32)" fill="#f4a470"><ellipse cx="0" cy="-5.0" rx="1.6" ry="3.8" transform="rotate(0)"/><ellipse cx="0" cy="-5.0" rx="1.6" ry="3.8" transform="rotate(30)"/><ellipse cx="0" cy="-5.0" rx="1.6" ry="3.8" transform="rotate(60)"/><ellipse cx="0" cy="-5.0" rx="1.6" ry="3.8" transform="rotate(90)"/><ellipse cx="0" cy="-5.0" rx="1.6" ry="3.8" transform="rotate(120)"/><ellipse cx="0" cy="-5.0" rx="1.6" ry="3.8" transform="rotate(150)"/><ellipse cx="0" cy="-5.0" rx="1.6" ry="3.8" transform="rotate(180)"/><ellipse cx="0" cy="-5.0" rx="1.6" ry="3.8" transform="rotate(210)"/><ellipse cx="0" cy="-5.0" rx="1.6" ry="3.8" transform="rotate(240)"/><ellipse cx="0" cy="-5.0" rx="1.6" ry="3.8" transform="rotate(270)"/><ellipse cx="0" cy="-5.0" rx="1.6" ry="3.8" transform="rotate(300)"/><ellipse cx="0" cy="-5.0" rx="1.6" ry="3.8" transform="rotate(330)"/><ellipse rx="3.1" ry="2.0" fill="#b9d4ec"/></g><g transform="translate(102 33)" fill="#f4a470"><ellipse cx="0" cy="-5.5" rx="1.8" ry="4.2" transform="rotate(0)"/><ellipse cx="0" cy="-5.5" rx="1.8" ry="4.2" transform="rotate(30)"/><ellipse cx="0" cy="-5.5" rx="1.8" ry="4.2" transform="rotate(60)"/><ellipse cx="0" cy="-5.5" rx="1.8" ry="4.2" transform="rotate(90)"/><ellipse cx="0" cy="-5.5" rx="1.8" ry="4.2" transform="rotate(120)"/><ellipse cx="0" cy="-5.5" rx="1.8" ry="4.2" transform="rotate(150)"/><ellipse cx="0" cy="-5.5" rx="1.8" ry="4.2" transform="rotate(180)"/><ellipse cx="0" cy="-5.5" rx="1.8" ry="4.2" transform="rotate(210)"/><ellipse cx="0" cy="-5.5" rx="1.8" ry="4.2" transform="rotate(240)"/><ellipse cx="0" cy="-5.5" rx="1.8" ry="4.2" transform="rotate(270)"/><ellipse cx="0" cy="-5.5" rx="1.8" ry="4.2" transform="rotate(300)"/><ellipse cx="0" cy="-5.5" rx="1.8" ry="4.2" transform="rotate(330)"/><ellipse rx="3.5" ry="2.2" fill="#b9d4ec"/></g><g transform="translate(36 23)" fill="none" stroke="#5a7898" stroke-width=".7"><ellipse cx="0" cy="-4.4" rx="1.4" ry="3.4" transform="rotate(0)"/><ellipse cx="0" cy="-4.4" rx="1.4" ry="3.4" transform="rotate(30)"/><ellipse cx="0" cy="-4.4" rx="1.4" ry="3.4" transform="rotate(60)"/><ellipse cx="0" cy="-4.4" rx="1.4" ry="3.4" transform="rotate(90)"/><ellipse cx="0" cy="-4.4" rx="1.4" ry="3.4" transform="rotate(120)"/><ellipse cx="0" cy="-4.4" rx="1.4" ry="3.4" transform="rotate(150)"/><ellipse cx="0" cy="-4.4" rx="1.4" ry="3.4" transform="rotate(180)"/><ellipse cx="0" cy="-4.4" rx="1.4" ry="3.4" transform="rotate(210)"/><ellipse cx="0" cy="-4.4" rx="1.4" ry="3.4" transform="rotate(240)"/><ellipse cx="0" cy="-4.4" rx="1.4" ry="3.4" transform="rotate(270)"/><ellipse cx="0" cy="-4.4" rx="1.4" ry="3.4" transform="rotate(300)"/><ellipse cx="0" cy="-4.4" rx="1.4" ry="3.4" transform="rotate(330)"/></g><g transform="translate(81 54)" fill="none" stroke="#6a88a8" stroke-width=".7"><ellipse cx="0" cy="-4.4" rx="1.4" ry="3.4" transform="rotate(0)"/><ellipse cx="0" cy="-4.4" rx="1.4" ry="3.4" transform="rotate(30)"/><ellipse cx="0" cy="-4.4" rx="1.4" ry="3.4" transform="rotate(60)"/><ellipse cx="0" cy="-4.4" rx="1.4" ry="3.4" transform="rotate(90)"/><ellipse cx="0" cy="-4.4" rx="1.4" ry="3.4" transform="rotate(120)"/><ellipse cx="0" cy="-4.4" rx="1.4" ry="3.4" transform="rotate(150)"/><ellipse cx="0" cy="-4.4" rx="1.4" ry="3.4" transform="rotate(180)"/><ellipse cx="0" cy="-4.4" rx="1.4" ry="3.4" transform="rotate(210)"/><ellipse cx="0" cy="-4.4" rx="1.4" ry="3.4" transform="rotate(240)"/><ellipse cx="0" cy="-4.4" rx="1.4" ry="3.4" transform="rotate(270)"/><ellipse cx="0" cy="-4.4" rx="1.4" ry="3.4" transform="rotate(300)"/><ellipse cx="0" cy="-4.4" rx="1.4" ry="3.4" transform="rotate(330)"/></g><circle cx="34" cy="51" r="8.5" fill="#e7ae22"/><circle cx="12.0" cy="24.0" r=".9" fill="#223a5d"/><circle cx="15.2" cy="24.0" r=".9" fill="#223a5d"/><circle cx="18.5" cy="24.0" r=".9" fill="#223a5d"/><circle cx="21.8" cy="24.0" r=".9" fill="#223a5d"/><circle cx="13.6" cy="28.0" r=".9" fill="#223a5d"/><circle cx="16.9" cy="28.0" r=".9" fill="#223a5d"/><circle cx="20.1" cy="28.0" r=".9" fill="#223a5d"/><circle cx="23.4" cy="28.0" r=".9" fill="#223a5d"/><circle cx="12.0" cy="32.0" r=".9" fill="#223a5d"/><circle cx="15.2" cy="32.0" r=".9" fill="#223a5d"/><circle cx="18.5" cy="32.0" r=".9" fill="#223a5d"/><circle cx="21.8" cy="32.0" r=".9" fill="#223a5d"/><circle cx="80.0" cy="33.0" r=".9" fill="#223a5d"/><circle cx="83.0" cy="33.0" r=".9" fill="#223a5d"/><circle cx="86.0" cy="33.0" r=".9" fill="#223a5d"/><circle cx="81.5" cy="36.7" r=".9" fill="#223a5d"/><circle cx="84.5" cy="36.7" r=".9" fill="#223a5d"/><circle cx="87.5" cy="36.7" r=".9" fill="#223a5d"/><circle cx="80.0" cy="40.3" r=".9" fill="#223a5d"/><circle cx="83.0" cy="40.3" r=".9" fill="#223a5d"/><circle cx="86.0" cy="40.3" r=".9" fill="#223a5d"/><circle cx="81.5" cy="44.0" r=".9" fill="#223a5d"/><circle cx="84.5" cy="44.0" r=".9" fill="#223a5d"/><circle cx="87.5" cy="44.0" r=".9" fill="#223a5d"/><circle cx="53.0" cy="47.0" r=".9" fill="#223a5d"/><circle cx="56.2" cy="47.0" r=".9" fill="#223a5d"/><circle cx="59.5" cy="47.0" r=".9" fill="#223a5d"/><circle cx="62.8" cy="47.0" r=".9" fill="#223a5d"/><circle cx="54.6" cy="50.7" r=".9" fill="#223a5d"/><circle cx="57.9" cy="50.7" r=".9" fill="#223a5d"/><circle cx="61.1" cy="50.7" r=".9" fill="#223a5d"/><circle cx="64.4" cy="50.7" r=".9" fill="#223a5d"/><circle cx="53.0" cy="54.3" r=".9" fill="#223a5d"/><circle cx="56.2" cy="54.3" r=".9" fill="#223a5d"/><circle cx="59.5" cy="54.3" r=".9" fill="#223a5d"/><circle cx="62.8" cy="54.3" r=".9" fill="#223a5d"/><circle cx="54.6" cy="58.0" r=".9" fill="#223a5d"/><circle cx="57.9" cy="58.0" r=".9" fill="#223a5d"/><circle cx="61.1" cy="58.0" r=".9" fill="#223a5d"/><circle cx="64.4" cy="58.0" r=".9" fill="#223a5d"/><circle cx="114.0" cy="24.0" r=".9" fill="#223a5d"/><circle cx="117.5" cy="24.0" r=".9" fill="#223a5d"/><circle cx="115.8" cy="27.5" r=".9" fill="#223a5d"/><circle cx="119.2" cy="27.5" r=".9" fill="#223a5d"/><circle cx="114.0" cy="31.0" r=".9" fill="#223a5d"/><circle cx="117.5" cy="31.0" r=".9" fill="#223a5d"/><g fill="none" stroke="#6a7a92" stroke-width=".7"><path d="M67 27 Q74 34 73 44 Q66 36 67 27Z"/><path d="M23 63 Q26 66 25 70"/></g></symbol>
</defs>
</svg>

<div class="a" id="title"></div>
<div class="a" id="tline"></div>
<div class="a" id="rail"></div>
<div class="a" id="logo"></div>
<div class="a" id="sel"></div>
<div class="a" id="panel"></div>
<div class="a" id="main"></div>
<div class="a" id="rrail"></div>
<div class="a" id="tl"></div>
<div class="a" id="task"></div>


<!-- title bar -->
<svg class="a" style="left:16px;top:8px" width="20" height="18" viewBox="0 0 20 18">
<path d="M2 5 L16 1.5 Q18 1.2 18 3 L18 4 L2 7.5Z" fill="#b56cf0"/>
<rect x="2" y="7" width="15" height="9" rx="1.5" fill="#8c64ea"/>
<rect x="2" y="7" width="15" height="3" fill="#c69af6"/>
<rect x="2" y="13" width="15" height="3" rx="1" fill="#5c4df0"/>
</svg>
<div class="a" style="left:50px;top:9px;font-size:13.5px;color:#e9e9ef;letter-spacing:-0.2px">Clipchamp - Video Editor</div>
<svg class="a" style="left:1860px;top:4px" width="130" height="26" viewBox="0 0 130 26">
<path d="M8.5 12.5 H21.5" stroke="#e6e6ec" stroke-width="1.4"/>
<rect x="58.7" y="6.7" width="12.6" height="12.6" rx="1.5" fill="none" stroke="#e6e6ec" stroke-width="1.4"/>
<path d="M108.5 6.5 L121.5 19.5 M121.5 6.5 L108.5 19.5" stroke="#e6e6ec" stroke-width="1.5"/>
</svg>

<!-- left rail -->
<svg class="a" style="left:20px;top:49px" width="36" height="34" viewBox="0 0 36 34">
<path d="M3 9 L29 3 Q32.5 2.3 33 5 Q33.3 7.5 30.5 8.2 L3 14Z" fill="#b563ee"/>
<rect x="3" y="12" width="30" height="19" rx="3" fill="#8f63e6"/>
<rect x="3" y="13" width="30" height="6" fill="#c99cf2"/>
<rect x="3" y="19" width="30" height="5" fill="#a276ec"/>
<rect x="3" y="24" width="30" height="7" rx="3" fill="#5f4ff0"/>
</svg>
<svg class="a" style="left:25px;top:116px" width="25" height="22" viewBox="0 0 25 22">
<path d="M2 4 Q2 2 4 2 H9.5 L12 4.5 H21 Q23 4.5 23 6.5 V18 Q23 20 21 20 H4 Q2 20 2 18Z" fill="#fff"/>
<path d="M2 8 H10 L13 5" stroke="#272733" stroke-width="1.3" fill="none"/>
</svg>
<div class="a nl" style="top:143px;font-weight:bold;color:#fff;font-size:10px">Your media</div>

<svg class="a" style="left:0;top:180px" width="75" height="680" viewBox="0 0 75 680" fill="none" stroke="#a9a9b6" stroke-width="1.6" stroke-linejoin="round" stroke-linecap="round">
<rect x="27.5" y="14" width="14" height="15" rx="2.5"/>
<path d="M41.5 19 L47 15.5 V27.5 L41.5 24"/>
<rect x="28.5" y="91" width="8" height="8" rx="1"/><rect x="28.5" y="100" width="8" height="8" rx="1"/><rect x="37.5" y="100" width="8" height="8" rx="1"/>
<path d="M42 88 L46.5 92.5 L42 97 L37.5 92.5Z"/>
<path d="M34 176 V163 L45 160 V173"/><path d="M34 167 L45 164"/>
<circle cx="31" cy="177" r="3"/><circle cx="42" cy="174" r="3"/>
<rect x="28.5" y="237" width="17" height="20" rx="2"/><path d="M32 237 V257 M42 237 V257 M28.5 242 H32 M28.5 247 H32 M28.5 252 H32 M42 242 H45.5 M42 247 H45.5 M42 252 H45.5 M32 247 H42"/>
<rect x="28.5" y="313" width="18" height="18" rx="2.5"/><path d="M28.5 327 L35 320 L45 330"/><circle cx="40" cy="318" r="1.8"/>
<path d="M30 390 V389 H45 V390 M37.5 389 V406 M34.5 406 H40.5" stroke-width="1.5"/>
<path d="M32.8 471 L29 467 Q27.5 465.3 28.9 463.8 Q30.6 462.3 32.8 464.5 Q35 462.3 36.7 463.8 Q38.1 465.3 36.6 467Z" stroke-width="1.4"/>
<path d="M42.5 463.5 L46.7 471 H38.3Z" stroke-width="1.4"/>
<rect x="28.7" y="473.7" width="7.5" height="7.5" stroke-width="1.4"/><circle cx="42.6" cy="477.5" r="4" stroke-width="1.4"/>
<rect x="28.8" y="538.5" width="18" height="18" rx="2.5" stroke-width="1.5"/>
<path d="M37.8 539 H44.5 Q46 539 46 540.5 V554.5 Q46 556 44.5 556 H37.8Z" fill="#a9a9b6" stroke="none"/>
<path d="M31 542 L37.8 547.5 L31 553Z" fill="#a9a9b6" stroke="none"/><path d="M44 542 L37.8 547.5 L44 553Z" fill="#1f1f2b" stroke="none"/>
<path d="M30 631 L28 624 L33 613" stroke-width="1.3"/>
<rect x="33" y="612" width="10" height="15" rx="1.5" transform="rotate(-15 38 619)"/>
<circle cx="36" cy="617" r="1.2" fill="#a9a9b6"/>
</svg>
<div class="a nl" style="top:219px;line-height:10.5px">Record &amp;<br>create</div>
<div class="a nl" style="top:299px">Templates</div>
<div class="a nl" style="top:374px">Music &amp; SFX</div>
<div class="a nl" style="top:449px">Stock video</div>
<div class="a nl" style="top:524px">Stock images</div>
<div class="a nl" style="top:598px">Text</div>
<div class="a nl" style="top:674px">Graphics</div>
<div class="a nl" style="top:744px">Transitions</div>
<div class="a nl" style="top:823px">Brand kit</div>

<!-- preview -->
<div class="a" style="left:586px;top:121px;width:1215px;height:684px;background:#000010"></div>
<div class="a" style="left:587px;top:122px;width:613px;height:682px;background:#f4cb6a"></div>
<div class="a" style="left:1200px;top:122px;width:601px;height:682px;background:#fff"></div>


<svg class="a" style="left:587px;top:122px" width="613" height="682"><use href="#cup" width="613" height="682"/></svg>
<svg class="a" style="left:1290px;top:280px" width="440" height="350"><use href="#lg" width="440" height="350"/></svg>

<!-- header -->
<div class="a" style="left:406px;top:50px;font-size:16px;color:#b3b3bd">Personal</div>
<svg class="a" style="left:484px;top:51px" width="12" height="16" viewBox="0 0 12 16"><path d="M3.5 2.5 L9 8 L3.5 13.5" fill="none" stroke="#b3b3bd" stroke-width="1.5"/></svg>
<div class="a" style="left:501px;top:41px;width:81px;height:41px;border-radius:5px;background:#262631"></div>
<div class="a" style="left:516px;top:50px;font-size:16px;color:#fff">FruiTea</div>
<svg class="a" style="left:590px;top:50px" width="14" height="20" viewBox="0 0 14 20"><g fill="#d0d0d8"><circle cx="7" cy="5" r="1.3"/><circle cx="7" cy="10" r="1.3"/><circle cx="7" cy="15" r="1.3"/></g></svg>
<svg class="a" style="left:622px;top:47px" width="26" height="26" viewBox="0 0 26 26"><path d="M10 18 H6.5 Q2.5 18 2.5 14.2 Q2.5 10.8 6 10.4 Q6.8 5.2 11.5 5.2 Q15.7 5.2 16.8 9.3 Q19 9.5 20.2 11" fill="none" stroke="#d0d0d8" stroke-width="1.6"/><circle cx="17" cy="17" r="5.6" fill="#bdbdc7"/><path d="M14.3 17 L16.3 19 L19.8 15.3" fill="none" stroke="#1d1d29" stroke-width="1.5"/></svg>
<div class="a" style="left:1797px;top:47px;width:117px;height:42px;border-radius:7px;background:#5b4cdb"></div>
<div class="a" style="left:1821px;top:61px;font-size:16px;font-weight:bold;color:#fff;letter-spacing:-0.2px">Export</div>
<svg class="a" style="left:1879px;top:64px" width="14" height="10" viewBox="0 0 14 10"><path d="M2.5 2.5 L7 7 L11.5 2.5" fill="none" stroke="#fff" stroke-width="1.8"/></svg>
<div class="a" style="left:1864px;top:110px;width:49px;height:31px;border-radius:5px;border:1.5px solid #a7a7b1"></div>
<div class="a" style="left:1872px;top:117px;font-family:'Liberation Mono',monospace;font-size:14px;color:#fff">16:9</div>

<!-- playback -->
<svg class="a" style="left:1095px;top:815px" width="200" height="40" viewBox="1095 815 200 40" fill="#f0f0f5">
<rect x="1104.5" y="826" width="2.6" height="15" rx="1"/>
<path d="M1120 827.5 Q1120 825.5 1118.3 826.6 L1108.8 832.5 Q1107.5 833.5 1108.8 834.5 L1118.3 840.4 Q1120 841.5 1120 839.5Z"/>
<path d="M1146 834 A8.2 8.2 0 1 0 1152.5 828" fill="none" stroke="#f0f0f5" stroke-width="2"/>
<path d="M1152.5 823.5 L1148.2 828 L1152.5 832.5Z"/>
<text x="1149.5" y="838.5" font-family="Liberation Sans" font-weight="bold" font-size="9" fill="#f0f0f5">5</text>
<path d="M1186 826 Q1186 823.5 1188.4 824.6 L1204 832 Q1206 833.5 1204 835 L1188.4 842.4 Q1186 843.5 1186 841Z"/>
<path d="M1243.5 834 A8.2 8.2 0 1 1 1237 828" fill="none" stroke="#f0f0f5" stroke-width="2"/>
<path d="M1237 823.5 L1241.3 828 L1237 832.5Z"/>
<text x="1232" y="838.5" font-family="Liberation Sans" font-weight="bold" font-size="9" fill="#f0f0f5">5</text>
<path d="M1267 827.5 Q1267 825.5 1268.7 826.6 L1278.2 832.5 Q1279.5 833.5 1278.2 834.5 L1268.7 840.4 Q1267 841.5 1267 839.5Z"/>
<rect x="1280.5" y="826" width="2.6" height="15" rx="1"/>
</svg>
<svg class="a" style="left:1768px;top:823px" width="20" height="20" viewBox="0 0 20 20"><path d="M2.5 7 V4 Q2.5 2.5 4 2.5 H7 M13 2.5 H16 Q17.5 2.5 17.5 4 V7 M17.5 13 V16 Q17.5 17.5 16 17.5 H13 M7 17.5 H4 Q2.5 17.5 2.5 16 V13" fill="none" stroke="#f0f0f5" stroke-width="1.8"/></svg>

<!-- right rail -->
<div class="a" style="left:1925px;top:45px;width:1px;height:798px;background:#2a2a36"></div>
<svg class="a" style="left:1912px;top:420px" width="14" height="48" viewBox="0 0 14 48"><path d="M14 0 Q2 4 2 12 V36 Q2 44 14 48Z" fill="#1d1d29" stroke="#2a2a36" stroke-width="1"/><path d="M9.5 19 L5.5 23.5 L9.5 28" fill="none" stroke="#6d6d7a" stroke-width="1.3"/></svg>
<svg class="a" style="left:1925px;top:40px" width="75" height="510" viewBox="0 0 75 510" fill="none" stroke="#a3a3b0" stroke-width="1.6" stroke-linejoin="round" stroke-linecap="round">
<path d="M29 16.5 H32.5 L39.5 11.5 V30.5 L32.5 25.5 H29 Q27.5 25.5 27.5 24 V18 Q27.5 16.5 29 16.5Z"/><path d="M42.5 17.5 Q44.5 21 42.5 24.5 M45.5 15 Q49 21 45.5 27"/>
<circle cx="37.5" cy="88" r="10"/><path d="M37.5 78 A10 10 0 0 1 37.5 98Z" fill="#a3a3b0"/>
<rect x="28.5" y="146" width="18" height="18" rx="2.5"/><path d="M34.5 146 V164 M34.5 158 H46.5"/>
<path d="M32 213 H43 M32 231 H43 M29 216 V228 M46 216 V228" stroke-width="1.4"/><g fill="#a3a3b0" stroke="none"><circle cx="29" cy="213" r="2.2"/><circle cx="46" cy="213" r="2.2"/><circle cx="29" cy="231" r="2.2"/><circle cx="46" cy="231" r="2.2"/></g>
<path d="M29 298 L40 287 M37 286 L41 286 M41 286 L41 290" stroke-width="1.5"/><path d="M43 281 L44 283.5 L46.5 284.5 L44 285.5 L43 288 L42 285.5 L39.5 284.5 L42 283.5Z M46 291 L46.7 292.5 L48 293 L46.7 293.5 L46 295 L45.3 293.5 L44 293 L45.3 292.5Z M34 279 L34.6 280.4 L36 281 L34.6 281.6 L34 283 L33.4 281.6 L32 281 L33.4 280.4Z" fill="#a3a3b0" stroke="none"/>
<circle cx="37.5" cy="355" r="10"/><path d="M34 345.5 V364.5 M37.5 345 V365 M41 345.5 V364.5"/>
<path d="M28.5 427 Q29 415 37.5 415 Q46 415 46.5 427" stroke-width="1.5"/><path d="M33 419 L35.5 421 M42 419 L40 421 M37.5 427 L41 418" stroke-width="1.5"/>
<path d="M30 480 V479 H45 V480 M37.5 479 V496 M34.5 496 H40.5" stroke-width="1.5"/>
</svg>
<div class="a rl" style="top:77px">Audio</div>
<div class="a rl" style="top:144px">Colour</div>
<div class="a rl" style="top:211px">Layout</div>
<div class="a rl" style="top:277px">Transform</div>
<div class="a rl" style="top:344px">Filters</div>
<div class="a rl" style="top:411px">Fade</div>
<div class="a rl" style="top:478px">Speed</div>
<div class="a rl" style="top:544px">Text</div>
<svg class="a" style="left:1866px;top:884px" width="42" height="16" viewBox="0 0 42 16"><path d="M0 16 Q4 16 6 8 Q8 1 14 1 H28 Q34 1 36 8 Q38 16 42 16Z" fill="#262631"/><path d="M17 7 L21 11 L25 7" fill="none" stroke="#e8e8ee" stroke-width="1.4"/></svg>

<!-- timeline -->
<div class="a" style="left:387px;top:899px;width:1538px;height:1px;background:#2a2a35"></div>
<div class="a tb" style="left:407px;top:912px"></div><div class="a tb" style="left:449px;top:912px"></div><div class="a tb" style="left:491px;top:912px"></div><div class="a tb" style="left:533px;top:912px"></div><div class="a tb" style="left:574px;top:912px"></div>
<svg class="a" style="left:400px;top:910px" width="220" height="36" viewBox="400 910 220 36" fill="none" stroke="#dcdce4" stroke-width="1.5" stroke-linecap="round" stroke-linejoin="round">
<path d="M418 925 H427 Q433 925 433 930 Q433 935 427 935 H421"/><path d="M421 921 L417 925 L421 929"/>
<path d="M470 925 H461 Q455 925 455 930 Q455 935 461 935 H467"/><path d="M467 921 L471 925 L467 929"/>
<path d="M502 919 L510 934 M512 919 L504 934"/><circle cx="503" cy="937" r="2.8"/><circle cx="511" cy="937" r="2.8"/>
<path d="M541 921 H556 M545.5 921 V919 H551.5 V921 M543 921 L544.5 939 H553.5 L555 921 M547 925 V935 M551 925 V935"/>
<path d="M589 936 Q585 936 585 932 V923 Q585 919 589 919 H593 Q597 919 597 923 V930"/><path d="M588 921 Q584 922 584 925"/>
<circle cx="595.5" cy="934.5" r="5" fill="#dcdce4" stroke="none"/><path d="M595.5 931.5 V937.5 M592.5 934.5 H598.5" stroke="#1a1a22" stroke-width="1.4"/>
</svg>
<div class="a" style="left:1126px;top:921px;font-family:'Liberation Mono',monospace;font-size:14.6px;color:#fff;white-space:pre"><b>0:04</b><span style="color:#8a8a94">.00 / </span><b>1:25</b><span style="color:#8a8a94">.00</span></div>
<div class="a tb" style="left:1789px;top:909px"></div><div class="a tb" style="left:1830px;top:909px"></div><div class="a tb" style="left:1871px;top:909px"></div>
<svg class="a" style="left:1780px;top:905px" width="140" height="40" viewBox="1780 905 140 40" fill="none" stroke="#d8d8e0" stroke-width="1.5" stroke-linecap="round">
<path d="M1805 917 V933 M1797 925 H1813"/><path d="M1838 925 H1854"/>
<path d="M1879 935 L1885.5 928.5 M1880.5 928.5 H1885.5 V933.5 M1896 916 L1889.5 922.5 M1889.5 917.5 V922.5 H1894.5"/>
</svg>
<div class="a" style="left:387px;top:956px;width:1538px;height:1px;background:#2c2c36"></div>
<div class="a rul" style="left:403px">0</div>
<div class="a rul" style="left:731px">0:02</div>
<div class="a rul" style="left:1023px">0:04</div>
<div class="a rul" style="left:1316px">0:06</div>
<div class="a rul" style="left:1608px">0:08</div>
<div class="a rul" style="left:1900px;width:25px;overflow:hidden">0:10</div>
<div class="a tick" style="left:568px;height:12px"></div><div class="a tick" style="left:885px;height:12px"></div><div class="a tick" style="left:1177px;height:12px"></div><div class="a tick" style="left:1470px;height:12px"></div><div class="a tick" style="left:1802px;height:12px"></div>
<div class="a tick" style="left:730px;height:26px"></div><div class="a tick" style="left:1022px;height:26px"></div><div class="a tick" style="left:1315px;height:26px"></div><div class="a tick" style="left:1607px;height:26px"></div><div class="a tick" style="left:1899px;height:26px"></div>
<div class="a" style="left:401px;top:997px;width:1524px;height:68px;border-radius:6px 0 0 6px;background:#1e1e2a"></div>

<div class="a clipT" style="left:401px;width:328px"></div>
<div class="a clipT" style="left:732px;width:285px"></div>
<div class="a clipT" style="left:1314px;width:289px"></div>
<svg class="a" style="left:401px;top:1033px" width="1210" height="31" viewBox="401 1033 1210 31" fill="none" stroke="#c6bff2" stroke-width="1.2">
<path d="M410.5 1044 V1041.5 H422.5 V1044 M416.5 1041.5 V1057.5 M413.5 1057.5 H419.5"/>
<path d="M741.5 1044 V1041.5 H753.5 V1044 M747.5 1041.5 V1057.5 M744.5 1057.5 H750.5"/>
<path d="M1323.5 1044 V1041.5 H1335.5 V1044 M1329.5 1041.5 V1057.5 M1326.5 1057.5 H1332.5"/>
</svg>
<div class="a ct" style="left:435px">FruiTea</div>
<div class="a ct" style="left:766px">Color Palette</div>
<div class="a ct" style="left:1348px">Spicy Punch</div>


<!-- video clips -->
<div class="a clipV" style="left:401px;width:327px;background:#fafafa"><svg width="327" height="67" viewBox="401 1072 327 67">
<use href="#lg" x="429.8" y="1076" width="75.5" height="60"/><use href="#lg" x="536.3" y="1076" width="75.5" height="60"/><use href="#lg" x="629.3" y="1076" width="75.5" height="60"/></svg></div>
<div class="a clipV" style="left:732px;width:285px"><svg width="285" height="67" viewBox="0 0 285 67">
<use href="#cp" x="0" y="0" width="49" height="67"/><use href="#be" x="49" y="0" width="72" height="67"/><use href="#cp" x="121" y="0" width="50" height="67"/><use href="#be" x="171" y="0" width="70" height="67"/><use href="#cp" x="241" y="0" width="50" height="67"/></svg></div>
<div class="a clipV" style="left:1021px;width:291px"><svg width="291" height="67" viewBox="0 0 291 67">
<svg x="0" width="57" height="67" viewBox="587 122 613 682" preserveAspectRatio="none"><use href="#cup" x="587" y="122" width="613" height="682"/></svg>
<svg x="115" width="59" height="67" viewBox="587 122 613 682" preserveAspectRatio="none"><use href="#cup" x="587" y="122" width="613" height="682"/></svg>
<svg x="232" width="59" height="67" viewBox="587 122 613 682" preserveAspectRatio="none"><use href="#cup" x="587" y="122" width="613" height="682"/></svg>
<use href="#lg" x="65.6" y="14.8" width="44.5" height="35.4"/><use href="#lg" x="182.9" y="14.8" width="44.5" height="35.4"/></svg></div>
<div class="a clipV" style="left:1315px;width:287px"><svg width="287" height="67" viewBox="0 0 287 67">
<use href="#sp" x="0" y="0" width="52" height="67"/><use href="#pt" x="52" y="0" width="65" height="67"/><use href="#sp" x="117" y="0" width="52" height="67"/><use href="#pt" x="169" y="0" width="66" height="67"/><use href="#sp" x="235" y="0" width="52" height="67"/></svg></div>
<div class="a clipV" style="left:1606px;width:291px"><svg width="291" height="67" viewBox="0 0 291 67">
<use href="#gl" x="0" y="0" width="49" height="67"/><use href="#pp" x="49" y="0" width="68" height="67"/><use href="#gl" x="117" y="0" width="50" height="67"/><use href="#pp" x="167" y="0" width="68" height="67"/><use href="#gl" x="235" y="0" width="50" height="67"/><use href="#pp" x="285" y="0" width="68" height="67"/></svg></div>
<div class="a clipV" style="left:1901px;width:24px;border-radius:5px 0 0 5px"><svg width="24" height="67" viewBox="0 0 24 67"><use href="#ps" x="-8" y="-5" width="130" height="74"/></svg></div>

<div class="a" style="left:401px;top:1146px;width:1524px;height:32px;border-radius:5px 0 0 5px;background:#3e6bda"></div>
<svg class="a" style="left:401px;top:1146px" width="1524" height="32" viewBox="0 0 1524 32">
<defs><pattern id="wv" x="0" y="0" width="20.8" height="32" patternUnits="userSpaceOnUse"><path d="M1.3 15.0 V17.0 M3.9 13.5 V18.5 M6.5 11.5 V20.5 M9.1 9.0 V23.0 M11.7 7.0 V25.0 M14.3 9.0 V23.0 M16.9 11.5 V20.5 M19.5 13.5 V18.5" stroke="#b4c8f7" stroke-width="1.1" opacity=".75"/></pattern></defs>
<rect x="210" y="0" width="1314" height="32" fill="url(#wv)"/>
</svg>
<svg class="a" style="left:407px;top:1153px" width="18" height="20" viewBox="0 0 18 20" fill="none" stroke="#dfe6fb" stroke-width="1.4"><path d="M6 15 V4 L15 2 V13"/><circle cx="4" cy="15.5" r="2.3"/><circle cx="13" cy="13.5" r="2.3"/></svg>
<div class="a ct" style="left:433px;top:1154px">Upbeat Funky Good Times</div>

<!-- media panel -->
<!--THUMBS-->
<div class="a thumb" style="left:107px;top:157px;background:#fafafa"><svg width="123" height="70" viewBox="0 0 123 70"><use href="#lg" x="22.2" y="4.7" width="77.6" height="61.7"/></svg></div>
<div class="a dur" style="left:114px;top:209px">0:02</div>
<div class="a chk" style="left:199px;top:207px"></div><svg class="a" style="left:206px;top:209px" width="14" height="12" viewBox="0 0 14 12"><path d="M2 6.5 L5.5 10 L12 3" fill="none" stroke="#1b2a2a" stroke-width="1.6"/></svg>
<div class="a lbl" style="left:108px;top:232px">Title</div>
<div class="a thumb" style="left:241px;top:157px;background:#fff"><svg width="123" height="70" viewBox="0 0 123 70"><use href="#cp" x="0" y="0" width="51" height="70"/><use href="#be" x="51" y="0" width="72" height="70"/></svg></div>
<div class="a dur" style="left:248px;top:209px">0:02</div>
<div class="a chk" style="left:333px;top:207px"></div><svg class="a" style="left:340px;top:209px" width="14" height="12" viewBox="0 0 14 12"><path d="M2 6.5 L5.5 10 L12 3" fill="none" stroke="#1b2a2a" stroke-width="1.6"/></svg>
<div class="a lbl" style="left:242px;top:232px">Color Palette</div>
<div class="a thumb" style="left:107px;top:255px;background:#4b4a66"><svg width="123" height="70" viewBox="0 0 123 70"><rect width="123" height="70" fill="#4d4c68"/><path d="M0.5 27.7 V42.3 M2.5 23.6 V46.4 M4.5 23.8 V46.2 M6.5 21.1 V48.9 M8.5 19.8 V50.2 M10.5 21.0 V49.0 M12.5 17.4 V52.6 M14.5 22.4 V47.6 M16.5 17.3 V52.7 M18.5 20.4 V49.6 M20.5 19.7 V50.3 M22.5 20.5 V49.5 M24.5 23.6 V46.4 M26.5 22.9 V47.1 M28.5 27.2 V42.8 M30.5 27.1 V42.9 M32.5 29.6 V40.4 M34.5 30.5 V39.5 M36.5 28.4 V41.6 M38.5 27.3 V42.7 M40.5 24.0 V46.0 M42.5 25.3 V44.7 M44.5 20.7 V49.3 M46.5 21.3 V48.7 M48.5 19.6 V50.4 M50.5 18.2 V51.8 M52.5 20.8 V49.2 M54.5 17.1 V52.9 M56.5 22.2 V47.8 M58.5 18.6 V51.4 M60.5 21.4 V48.6 M62.5 22.1 V47.9 M64.5 23.0 V47.0 M66.5 26.3 V43.7 M68.5 26.5 V43.5 M70.5 29.5 V40.5 M72.5 31.0 V39.0 M74.5 29.1 V40.9 M76.5 27.1 V42.9 M78.5 24.7 V45.3 M80.5 25.0 V45.0 M82.5 20.8 V49.2 M84.5 23.1 V46.9 M86.5 18.7 V51.3 M88.5 19.6 V50.4 M90.5 19.1 V50.9 M92.5 17.6 V52.4 M94.5 21.6 V48.4 M96.5 18.1 V51.9 M98.5 22.8 V47.2 M100.5 20.9 V49.1 M102.5 23.4 V46.6 M104.5 25.1 V44.9 M106.5 26.2 V43.8 M108.5 29.1 V40.9 M110.5 30.5 V39.5 M112.5 29.7 V40.3 M114.5 27.2 V42.8 M116.5 25.7 V44.3 M118.5 24.2 V45.8 M120.5 21.4 V48.6 M122.5 23.5 V46.5" stroke="#8a89a2" stroke-width="1.2"/></svg></div>
<div class="a dur" style="left:114px;top:307px">2:17</div>
<div class="a chk" style="left:199px;top:305px"></div><svg class="a" style="left:206px;top:307px" width="14" height="12" viewBox="0 0 14 12"><path d="M2 6.5 L5.5 10 L12 3" fill="none" stroke="#1b2a2a" stroke-width="1.6"/></svg>
<div class="a lbl" style="left:108px;top:330px">Upbeat Funky Good Tim..</div>
<div class="a thumb" style="left:241px;top:255px;background:#fff"><svg width="123" height="70" viewBox="0 0 123 70"><svg x="0" y="0" width="62" height="70" viewBox="587 122 613 682" preserveAspectRatio="none"><use href="#cup" x="587" y="122" width="613" height="682"/></svg><rect x="61" width="62" height="70" fill="#fff"/><use href="#lg" x="70.6" y="15.7" width="44.6" height="35.5"/></svg></div>
<div class="a dur" style="left:248px;top:307px">0:02</div>
<div class="a chk" style="left:333px;top:305px"></div><svg class="a" style="left:340px;top:307px" width="14" height="12" viewBox="0 0 14 12"><path d="M2 6.5 L5.5 10 L12 3" fill="none" stroke="#1b2a2a" stroke-width="1.6"/></svg>
<div class="a lbl" style="left:242px;top:330px">Cup Mockup</div>
<div class="a thumb" style="left:107px;top:353px;background:#fff"><svg width="123" height="70" viewBox="0 0 123 70"><use href="#sp" x="0" y="0" width="54" height="70"/><use href="#pt" x="54" y="0" width="69" height="70"/></svg></div>
<div class="a dur" style="left:114px;top:405px">0:02</div>
<div class="a chk" style="left:199px;top:403px"></div><svg class="a" style="left:206px;top:405px" width="14" height="12" viewBox="0 0 14 12"><path d="M2 6.5 L5.5 10 L12 3" fill="none" stroke="#1b2a2a" stroke-width="1.6"/></svg>
<div class="a lbl" style="left:108px;top:428px">Spicy Punch</div>
<div class="a thumb" style="left:241px;top:353px;background:#fff"><svg width="123" height="70" viewBox="0 0 123 70"><use href="#gl" x="0" y="0" width="51" height="70"/><use href="#pp" x="51" y="0" width="72" height="70"/></svg></div>
<div class="a dur" style="left:248px;top:405px">0:02</div>
<div class="a chk" style="left:333px;top:403px"></div><svg class="a" style="left:340px;top:405px" width="14" height="12" viewBox="0 0 14 12"><path d="M2 6.5 L5.5 10 L12 3" fill="none" stroke="#1b2a2a" stroke-width="1.6"/></svg>
<div class="a lbl" style="left:242px;top:428px">Good Times</div>
<div class="a thumb" style="left:107px;top:450px;background:#fff"><svg width="123" height="70" viewBox="0 0 123 70"><use href="#ps" x="0" y="0" width="123" height="70"/></svg></div>
<div class="a dur" style="left:114px;top:502px">0:02</div>
<div class="a chk" style="left:199px;top:500px"></div><svg class="a" style="left:206px;top:502px" width="14" height="12" viewBox="0 0 14 12"><path d="M2 6.5 L5.5 10 L12 3" fill="none" stroke="#1b2a2a" stroke-width="1.6"/></svg>
<div class="a lbl" style="left:108px;top:525px">Personas</div>
<div class="a thumb" style="left:241px;top:450px;background:#fdfaf8"><svg width="123" height="70" viewBox="0 0 123 70"><use href="#lg" x="5.1" y="21.9" width="38.3" height="30.5"/><rect x="50" width="73" height="70" fill="#dec8c6"/><rect x="50" width="6" height="70" fill="#e9d6d2"/><path d="M50 56 H123 V70 H50Z" fill="#7e5844"/><rect x="56" y="60" width="14" height="10" fill="#c9b4a8"/><rect x="74" y="60" width="20" height="10" fill="#b8a498"/><rect x="98" y="60" width="14" height="10" fill="#c0aca0"/><rect x="116" y="14" width="7" height="56" fill="#a3644a"/><path d="M61 2 L123 19 V27 L61 8Z" fill="#1f1a1a"/><path d="M104 0 H114 L123 8 V14Z" fill="#1f1a1a"/><path d="M69 9 V25 M97 12 V31" stroke="#8a8a96" stroke-width="1"/><path d="M57.5 24.7 L108 31.7 L108 59 L57 54.5Z" fill="#1f4a6c" stroke="#eef0f0" stroke-width="1"/><use href="#fl" x="70" y="33" width="26" height="21"/><text x="63" y="47" font-family="Liberation Serif" font-weight="bold" font-size="9" fill="#f4f4f4" textLength="40" lengthAdjust="spacingAndGlyphs" transform="rotate(6 83 43)">FruiTea</text></svg></div>
<div class="a dur" style="left:248px;top:502px">0:02</div>
<div class="a lbl" style="left:242px;top:525px">Store Banner</div>
<div class="a thumb" style="left:107px;top:548px;background:#fff"><svg width="123" height="70" viewBox="0 0 123 70"><rect width="62" height="70" fill="#fbd3bb"/><rect x="62" width="61" height="70" fill="#5eb1d0"/><text x="11" y="41" font-family="Liberation Sans" font-size="6" fill="#555">Packaging</text><svg x="37.8" y="4" width="49" height="54.5" viewBox="587 122 613 682"><use href="#cupb" x="587" y="122" width="613" height="682"/></svg><path d="M82.5 19 L115.8 19 L112.5 58 L86 58Z" fill="#f6f4f0"/><path d="M82.5 17.5 H115.8 V20 H82.5Z" fill="#e9e6e0"/><path d="M84 30 H114.5 L113.7 42 H85.2Z" fill="#e5604f"/><g fill="#223a5d"><circle cx="90" cy="24" r="2"/><circle cx="104" cy="50" r="2.5"/><circle cx="95" cy="54" r="2"/><circle cx="108" cy="25" r="1.6"/></g><g fill="#f2a65a"><circle cx="99" cy="24" r="1.5"/><circle cx="90" cy="47" r="1.6"/></g></svg></div>
<div class="a dur" style="left:114px;top:600px">0:02</div>
<div class="a lbl" style="left:108px;top:623px">Packaging</div>
<div class="a thumb" style="left:241px;top:548px;background:#fff"><svg width="123" height="70" viewBox="0 0 123 70"><rect width="123" height="70" fill="#ea6a5e"/><g transform="translate(6 6)" fill="#f9cdb6" opacity="1"><ellipse cx="0" cy="-5.0" rx="2.7" ry="4.0" transform="rotate(0)"/><ellipse cx="0" cy="-5.0" rx="2.7" ry="4.0" transform="rotate(60)"/><ellipse cx="0" cy="-5.0" rx="2.7" ry="4.0" transform="rotate(120)"/><ellipse cx="0" cy="-5.0" rx="2.7" ry="4.0" transform="rotate(180)"/><ellipse cx="0" cy="-5.0" rx="2.7" ry="4.0" transform="rotate(240)"/><ellipse cx="0" cy="-5.0" rx="2.7" ry="4.0" transform="rotate(300)"/></g><g transform="translate(22 4)" fill="#f9cdb6" opacity="1"><ellipse cx="0" cy="-3.3" rx="1.8" ry="2.7" transform="rotate(0)"/><ellipse cx="0" cy="-3.3" rx="1.8" ry="2.7" transform="rotate(60)"/><ellipse cx="0" cy="-3.3" rx="1.8" ry="2.7" transform="rotate(120)"/><ellipse cx="0" cy="-3.3" rx="1.8" ry="2.7" transform="rotate(180)"/><ellipse cx="0" cy="-3.3" rx="1.8" ry="2.7" transform="rotate(240)"/><ellipse cx="0" cy="-3.3" rx="1.8" ry="2.7" transform="rotate(300)"/></g><g transform="translate(112 8)" fill="#f9cdb6" opacity="1"><ellipse cx="0" cy="-5.5" rx="3.0" ry="4.5" transform="rotate(0)"/><ellipse cx="0" cy="-5.5" rx="3.0" ry="4.5" transform="rotate(60)"/><ellipse cx="0" cy="-5.5" rx="3.0" ry="4.5" transform="rotate(120)"/><ellipse cx="0" cy="-5.5" rx="3.0" ry="4.5" transform="rotate(180)"/><ellipse cx="0" cy="-5.5" rx="3.0" ry="4.5" transform="rotate(240)"/><ellipse cx="0" cy="-5.5" rx="3.0" ry="4.5" transform="rotate(300)"/></g><g transform="translate(4 30)" fill="#f9cdb6" opacity="1"><ellipse cx="0" cy="-4.4" rx="2.4" ry="3.6" transform="rotate(0)"/><ellipse cx="0" cy="-4.4" rx="2.4" ry="3.6" transform="rotate(60)"/><ellipse cx="0" cy="-4.4" rx="2.4" ry="3.6" transform="rotate(120)"/><ellipse cx="0" cy="-4.4" rx="2.4" ry="3.6" transform="rotate(180)"/><ellipse cx="0" cy="-4.4" rx="2.4" ry="3.6" transform="rotate(240)"/><ellipse cx="0" cy="-4.4" rx="2.4" ry="3.6" transform="rotate(300)"/></g><g transform="translate(118 34)" fill="#f9cdb6" opacity="1"><ellipse cx="0" cy="-3.9" rx="2.1" ry="3.1" transform="rotate(0)"/><ellipse cx="0" cy="-3.9" rx="2.1" ry="3.1" transform="rotate(60)"/><ellipse cx="0" cy="-3.9" rx="2.1" ry="3.1" transform="rotate(120)"/><ellipse cx="0" cy="-3.9" rx="2.1" ry="3.1" transform="rotate(180)"/><ellipse cx="0" cy="-3.9" rx="2.1" ry="3.1" transform="rotate(240)"/><ellipse cx="0" cy="-3.9" rx="2.1" ry="3.1" transform="rotate(300)"/></g><g transform="translate(10 62)" fill="#f9cdb6" opacity="1"><ellipse cx="0" cy="-5.0" rx="2.7" ry="4.0" transform="rotate(0)"/><ellipse cx="0" cy="-5.0" rx="2.7" ry="4.0" transform="rotate(60)"/><ellipse cx="0" cy="-5.0" rx="2.7" ry="4.0" transform="rotate(120)"/><ellipse cx="0" cy="-5.0" rx="2.7" ry="4.0" transform="rotate(180)"/><ellipse cx="0" cy="-5.0" rx="2.7" ry="4.0" transform="rotate(240)"/><ellipse cx="0" cy="-5.0" rx="2.7" ry="4.0" transform="rotate(300)"/></g><g transform="translate(104 60)" fill="#f9cdb6" opacity="1"><ellipse cx="0" cy="-5.5" rx="3.0" ry="4.5" transform="rotate(0)"/><ellipse cx="0" cy="-5.5" rx="3.0" ry="4.5" transform="rotate(60)"/><ellipse cx="0" cy="-5.5" rx="3.0" ry="4.5" transform="rotate(120)"/><ellipse cx="0" cy="-5.5" rx="3.0" ry="4.5" transform="rotate(180)"/><ellipse cx="0" cy="-5.5" rx="3.0" ry="4.5" transform="rotate(240)"/><ellipse cx="0" cy="-5.5" rx="3.0" ry="4.5" transform="rotate(300)"/></g><g transform="translate(40 66)" fill="#f9cdb6" opacity="1"><ellipse cx="0" cy="-2.8" rx="1.5" ry="2.2" transform="rotate(0)"/><ellipse cx="0" cy="-2.8" rx="1.5" ry="2.2" transform="rotate(60)"/><ellipse cx="0" cy="-2.8" rx="1.5" ry="2.2" transform="rotate(120)"/><ellipse cx="0" cy="-2.8" rx="1.5" ry="2.2" transform="rotate(180)"/><ellipse cx="0" cy="-2.8" rx="1.5" ry="2.2" transform="rotate(240)"/><ellipse cx="0" cy="-2.8" rx="1.5" ry="2.2" transform="rotate(300)"/></g><g transform="translate(78 66)" fill="#f9cdb6" opacity="1"><ellipse cx="0" cy="-3.3" rx="1.8" ry="2.7" transform="rotate(0)"/><ellipse cx="0" cy="-3.3" rx="1.8" ry="2.7" transform="rotate(60)"/><ellipse cx="0" cy="-3.3" rx="1.8" ry="2.7" transform="rotate(120)"/><ellipse cx="0" cy="-3.3" rx="1.8" ry="2.7" transform="rotate(180)"/><ellipse cx="0" cy="-3.3" rx="1.8" ry="2.7" transform="rotate(240)"/><ellipse cx="0" cy="-3.3" rx="1.8" ry="2.7" transform="rotate(300)"/></g><g transform="translate(62 3)" fill="#f9cdb6" opacity="1"><ellipse cx="0" cy="-2.8" rx="1.5" ry="2.2" transform="rotate(0)"/><ellipse cx="0" cy="-2.8" rx="1.5" ry="2.2" transform="rotate(60)"/><ellipse cx="0" cy="-2.8" rx="1.5" ry="2.2" transform="rotate(120)"/><ellipse cx="0" cy="-2.8" rx="1.5" ry="2.2" transform="rotate(180)"/><ellipse cx="0" cy="-2.8" rx="1.5" ry="2.2" transform="rotate(240)"/><ellipse cx="0" cy="-2.8" rx="1.5" ry="2.2" transform="rotate(300)"/></g><g transform="translate(94 2)" fill="#f9cdb6" opacity="1"><ellipse cx="0" cy="-2.8" rx="1.5" ry="2.2" transform="rotate(0)"/><ellipse cx="0" cy="-2.8" rx="1.5" ry="2.2" transform="rotate(60)"/><ellipse cx="0" cy="-2.8" rx="1.5" ry="2.2" transform="rotate(120)"/><ellipse cx="0" cy="-2.8" rx="1.5" ry="2.2" transform="rotate(180)"/><ellipse cx="0" cy="-2.8" rx="1.5" ry="2.2" transform="rotate(240)"/><ellipse cx="0" cy="-2.8" rx="1.5" ry="2.2" transform="rotate(300)"/></g><g transform="translate(26 50)" fill="#f9cdb6" opacity="0.8"><ellipse cx="0" cy="-2.8" rx="1.5" ry="2.2" transform="rotate(0)"/><ellipse cx="0" cy="-2.8" rx="1.5" ry="2.2" transform="rotate(60)"/><ellipse cx="0" cy="-2.8" rx="1.5" ry="2.2" transform="rotate(120)"/><ellipse cx="0" cy="-2.8" rx="1.5" ry="2.2" transform="rotate(180)"/><ellipse cx="0" cy="-2.8" rx="1.5" ry="2.2" transform="rotate(240)"/><ellipse cx="0" cy="-2.8" rx="1.5" ry="2.2" transform="rotate(300)"/></g><use href="#lg" x="37" y="16.6" width="46.8" height="37.2"/></svg></div>
<div class="a dur" style="left:248px;top:600px">0:02</div>
<div class="a lbl" style="left:242px;top:623px">Background</div>
<div class="a thumb" style="left:107px;top:648px;background:#fff"><svg width="123" height="70" viewBox="0 0 123 70"><use href="#pt" x="0" y="0" width="62" height="70"/><use href="#pt" x="61" y="0" width="62" height="70"/></svg></div>
<div class="a dur" style="left:114px;top:700px">0:02</div>
<div class="a lbl" style="left:108px;top:723px">Pattern - Spicy Punch</div>
<div class="a thumb" style="left:241px;top:648px;background:#fff"><svg width="123" height="70" viewBox="0 0 123 70"><use href="#so" x="0" y="0" width="123" height="70"/></svg></div>
<div class="a dur" style="left:248px;top:700px">0:02</div>
<div class="a lbl" style="left:242px;top:723px">Social Post</div>
<div class="a thumb" style="left:107px;top:750px;background:#fff"><svg width="123" height="70" viewBox="0 0 123 70"><use href="#wp" x="0" y="0" width="123" height="70"/><rect x="68" width="55" height="70" fill="#fbfbfb"/><rect x="68" y="24" width="55" height="32" fill="#f9cdb5"/><text x="79" y="9" font-family="Liberation Sans" font-size="6" fill="#4a6a8a">Citrus Blast</text><svg x="79" y="15" width="32" height="54" viewBox="40 0 40 70" preserveAspectRatio="none"><use href="#wp" x="0" y="0" width="123" height="70"/></svg><rect x="85" y="26" width="20" height="20" fill="#e05a50"/><use href="#fl" x="89" y="27" width="12" height="10"/></svg></div>
<div class="a dur" style="left:114px;top:802px;opacity:.55">0:02</div>
<div class="a lbl" style="left:108px;top:825px">Packakging-01</div>
<div class="a thumb" style="left:241px;top:750px;background:#fff"><svg width="123" height="70" viewBox="0 0 123 70"><use href="#wp" x="0" y="0" width="123" height="70"/></svg></div>
<div class="a dur" style="left:248px;top:802px;opacity:.55">0:02</div>
<div class="a lbl" style="left:242px;top:825px">Pattern - Citrus Blast</div>
<!--/THUMBS-->
<div class="a tab" style="left:104px;color:#fff;font-weight:bold;letter-spacing:-0.3px">All</div>
<div class="a" style="left:104px;top:80px;width:18px;height:3px;border-radius:2px;background:#fff"></div>
<div class="a tab" style="left:155px">Videos</div>
<div class="a tab" style="left:236px">Images</div>
<div class="a tab" style="left:315px">Audio</div>
<div class="a" style="left:101px;top:95px;width:263px;height:42px;border-radius:6px;background:#5b4cdb"></div>
<div class="a" style="left:327px;top:95px;width:2px;height:42px;background:#3b31a8"></div>
<div class="a" style="left:101px;top:108px;width:226px;text-align:center;font-size:15px;font-weight:bold;letter-spacing:-0.3px">Import media</div>
<svg class="a" style="left:338px;top:112px" width="14" height="10" viewBox="0 0 14 10"><path d="M2.5 2.5 L7 7 L11.5 2.5" fill="none" stroke="#fff" stroke-width="1.8"/></svg>
<div class="a" style="left:75px;top:1148px;width:312px;height:1px;background:#34343f"></div>
<svg class="a" style="left:96px;top:1166px" width="20" height="18" viewBox="0 0 20 18"><path d="M8 13 H5 Q1.8 13 1.8 9.8 Q1.8 7 4.6 6.6 Q5.3 2.3 9.2 2.3 Q12.6 2.3 13.5 5.6" fill="none" stroke="#fff" stroke-width="1.5"/><circle cx="13" cy="11.5" r="5" fill="#fff"/><path d="M10.6 11.5 L12.4 13.3 L15.4 10" fill="none" stroke="#272732" stroke-width="1.4"/></svg>
<div class="a" style="left:122px;top:1167px;font-size:13px;color:#fff;font-weight:bold;letter-spacing:-0.55px">Your media is backed up</div>
<svg class="a" style="left:345px;top:1168px" width="16" height="12" viewBox="0 0 16 12"><path d="M2.5 3 L8 8.5 L13.5 3" fill="none" stroke="#fff" stroke-width="1.6"/></svg>
<svg class="a" style="left:386px;top:662px" width="16" height="54" viewBox="0 0 16 54"><path d="M0 0 Q1 8 7 9 Q14 10 14 17 V37 Q14 44 7 45 Q1 46 0 54Z" fill="#272732"/><path d="M8.8 24.5 L5.3 28.5 L8.8 32.5" fill="none" stroke="#e6e6ee" stroke-width="1.5"/></svg>
<div class="a" style="left:435px;top:728px;width:1px;height:25px;background:#2c2c38"></div>

<!-- taskbar -->
<svg class="a" style="left:18px;top:1208px" width="34" height="34" viewBox="0 0 34 34">
<defs><radialGradient id="sun" cx=".35" cy=".3" r=".8"><stop offset="0" stop-color="#ffd84a"/><stop offset=".7" stop-color="#f9a825"/><stop offset="1" stop-color="#f08c1a"/></radialGradient></defs>
<circle cx="15.5" cy="16.5" r="12.3" fill="url(#sun)"/>
<path d="M13 27 Q9 27 9 23.5 Q9 20.5 12.3 20.2 Q13.3 16 17.8 16 Q22 16 23 19.8 Q26.5 19.8 26.5 23.4 Q26.5 27 23 27Z" fill="#e9f2fb" stroke="#cfdcea" stroke-width=".8"/>
</svg>
<div class="a" style="left:54px;top:1211px;font-size:12.5px;color:#1f1f1f">68°F</div>
<div class="a" style="left:54px;top:1228px;font-size:12px;color:#4a4a4a;letter-spacing:-0.2px">Mostly Sunny</div>
<svg class="a" style="left:820px;top:1204px" width="370" height="46" viewBox="820 1204 370 46">
<defs>
<linearGradient id="win" x1="0" y1="0" x2="1" y2="1"><stop offset="0" stop-color="#3ccbf4"/><stop offset="1" stop-color="#0f6fd6"/></linearGradient>
<linearGradient id="tm" x1="0" y1="0" x2="1" y2="1"><stop offset="0" stop-color="#8b8df0"/><stop offset="1" stop-color="#5558b8"/></linearGradient>
<linearGradient id="eg" x1="0" y1="0" x2="1" y2="1"><stop offset="0" stop-color="#35c1f1"/><stop offset=".5" stop-color="#1b7fd8"/><stop offset="1" stop-color="#0c4fa8"/></linearGradient>
</defs>
<rect x="827" y="1213" width="11.8" height="11.8" rx="1" fill="url(#win)"/><rect x="840" y="1213" width="11.8" height="11.8" rx="1" fill="url(#win)"/><rect x="827" y="1226" width="11.8" height="11.8" rx="1" fill="url(#win)"/><rect x="840" y="1226" width="11.8" height="11.8" rx="1" fill="url(#win)"/>
<circle cx="883" cy="1223" r="8" fill="none" stroke="#1a1a1a" stroke-width="2.6"/><path d="M889 1229 L896 1236" stroke="#1a1a1a" stroke-width="2.8" stroke-linecap="round"/>
<rect x="918" y="1222" width="17" height="15" rx="1.5" fill="#232323"/><rect x="926" y="1213" width="17" height="17" rx="2" fill="#d8d8d8" opacity=".9"/><rect x="926" y="1222" width="9" height="8" fill="#8a8a8a"/>
<path d="M977 1213 A12.5 12.5 0 1 1 968 1234 L965 1238 L966 1231 A12.5 12.5 0 0 1 977 1213Z" fill="url(#tm)"/><rect x="970" y="1219" width="10" height="9" rx="2" fill="#fff"/><path d="M980 1223.5 L985 1220 V1227Z" fill="#fff"/>
<path d="M1010 1216 Q1010 1214 1012 1214 H1019 L1022 1217 H1033 Q1035 1217 1035 1219 V1235 Q1035 1237 1033 1237 H1012 Q1010 1237 1010 1235Z" fill="#f7c94a"/><path d="M1010 1220 H1035 V1235 Q1035 1237 1033 1237 H1012 Q1010 1237 1010 1235Z" fill="#fcd768"/><rect x="1016" y="1230" width="13" height="5" rx="1" fill="#1e7ad6"/>
<circle cx="1068.5" cy="1225.5" r="12.5" fill="url(#eg)"/><path d="M1062 1228 Q1062 1220 1070 1220 Q1078 1220 1079 1227 Q1075 1224 1070 1225 Q1064 1226 1066 1232 Q1070 1236 1078 1233 Q1073 1238 1066 1236 Q1062 1233 1062 1228Z" fill="#7fe07a" opacity=".9"/><circle cx="1070" cy="1227" r="3.5" fill="#fff" opacity=".85"/>
<path d="M1102 1219 H1127 V1235 Q1127 1238 1124 1238 H1105 Q1102 1238 1102 1235Z" fill="#1d4f94"/><path d="M1108 1219 V1216 Q1108 1213 1111 1213 H1118 Q1121 1213 1121 1216 V1219" fill="none" stroke="#3a90e0" stroke-width="1.6"/>
<rect x="1109" y="1223" width="5" height="5" fill="#f25022"/><rect x="1115" y="1223" width="5" height="5" fill="#7fba00"/><rect x="1109" y="1229" width="5" height="5" fill="#00a4ef"/><rect x="1115" y="1229" width="5" height="5" fill="#ffb900"/>
<rect x="1140" y="1206" width="41" height="40" rx="5" fill="#f8f9fc" stroke="#e0e4ee" stroke-width=".8"/>
<path d="M1148 1217 L1169 1212 Q1172 1211.5 1172.5 1214 Q1172.8 1216 1170.5 1216.8 L1148 1221.5Z" fill="#b563ee"/>
<rect x="1148" y="1220" width="25" height="18" rx="2.5" fill="#8f63e6"/><rect x="1148" y="1221" width="25" height="5" fill="#c99cf2"/><rect x="1148" y="1226" width="25" height="5" fill="#a276ec"/><rect x="1148" y="1232" width="25" height="6" rx="2.5" fill="#5f4ff0"/>
<rect x="1153" y="1242.5" width="15" height="3" rx="1.5" fill="#1f6fd0"/>
</svg>
<svg class="a" style="left:1765px;top:1212px" width="140" height="28" viewBox="1765 1212 140 28" fill="none" stroke="#1b1b1b" stroke-width="1.5" stroke-linecap="round" stroke-linejoin="round">
<path d="M1769.5 1229 L1775.5 1223 L1781.5 1229"/>
<path d="M1808 1232 Q1803 1232 1803 1227.5 Q1803 1223.5 1807 1223.2 Q1808.5 1218.5 1813.5 1218.5 Q1818 1218.5 1819.5 1222.5 Q1824.5 1222.5 1824.5 1227.3 Q1824.5 1232 1820 1232Z" fill="#8a8a8a"/>
<path d="M1804 1231 L1813 1226 L1823 1231" stroke="none" fill="#c8c8c8"/>
<path d="M1834 1223.5 Q1841.5 1216.5 1849 1223.5 M1836.5 1226.5 Q1841.5 1222 1846.5 1226.5 M1839 1229.5 Q1841.5 1227.5 1844 1229.5"/><circle cx="1841.5" cy="1232" r="1" fill="#1b1b1b"/>
<path d="M1859 1222.5 H1862 L1867 1218.5 V1233 L1862 1229 H1859Z"/><path d="M1869.5 1222.5 Q1871 1225.8 1869.5 1229 M1872 1220.5 Q1874.5 1225.8 1872 1231"/>
<rect x="1883.5" y="1220.5" width="15" height="10" rx="2.5"/><rect x="1886" y="1223" width="10" height="5" fill="#1b1b1b" stroke="none"/><path d="M1900 1223.5 V1227.5"/>
</svg>
<div class="a" style="left:1926px;top:1210px;font-size:12.5px;color:#1b1b1b">11:11 AM</div>
<div class="a" style="left:1917px;top:1227px;font-size:12.5px;color:#1b1b1b">10/27/2022</div>

<!-- playhead -->
<div class="a" style="left:1019px;top:962px;width:3px;height:238px;background:#fff"></div>
<svg class="a" style="left:1012px;top:956px" width="16" height="16" viewBox="0 0 16 16"><path d="M2 3 Q2 1 4 1 H12 Q14 1 14 3 V9 L8 14.5 L2 9Z" fill="#fff"/></svg>
</body></html>
